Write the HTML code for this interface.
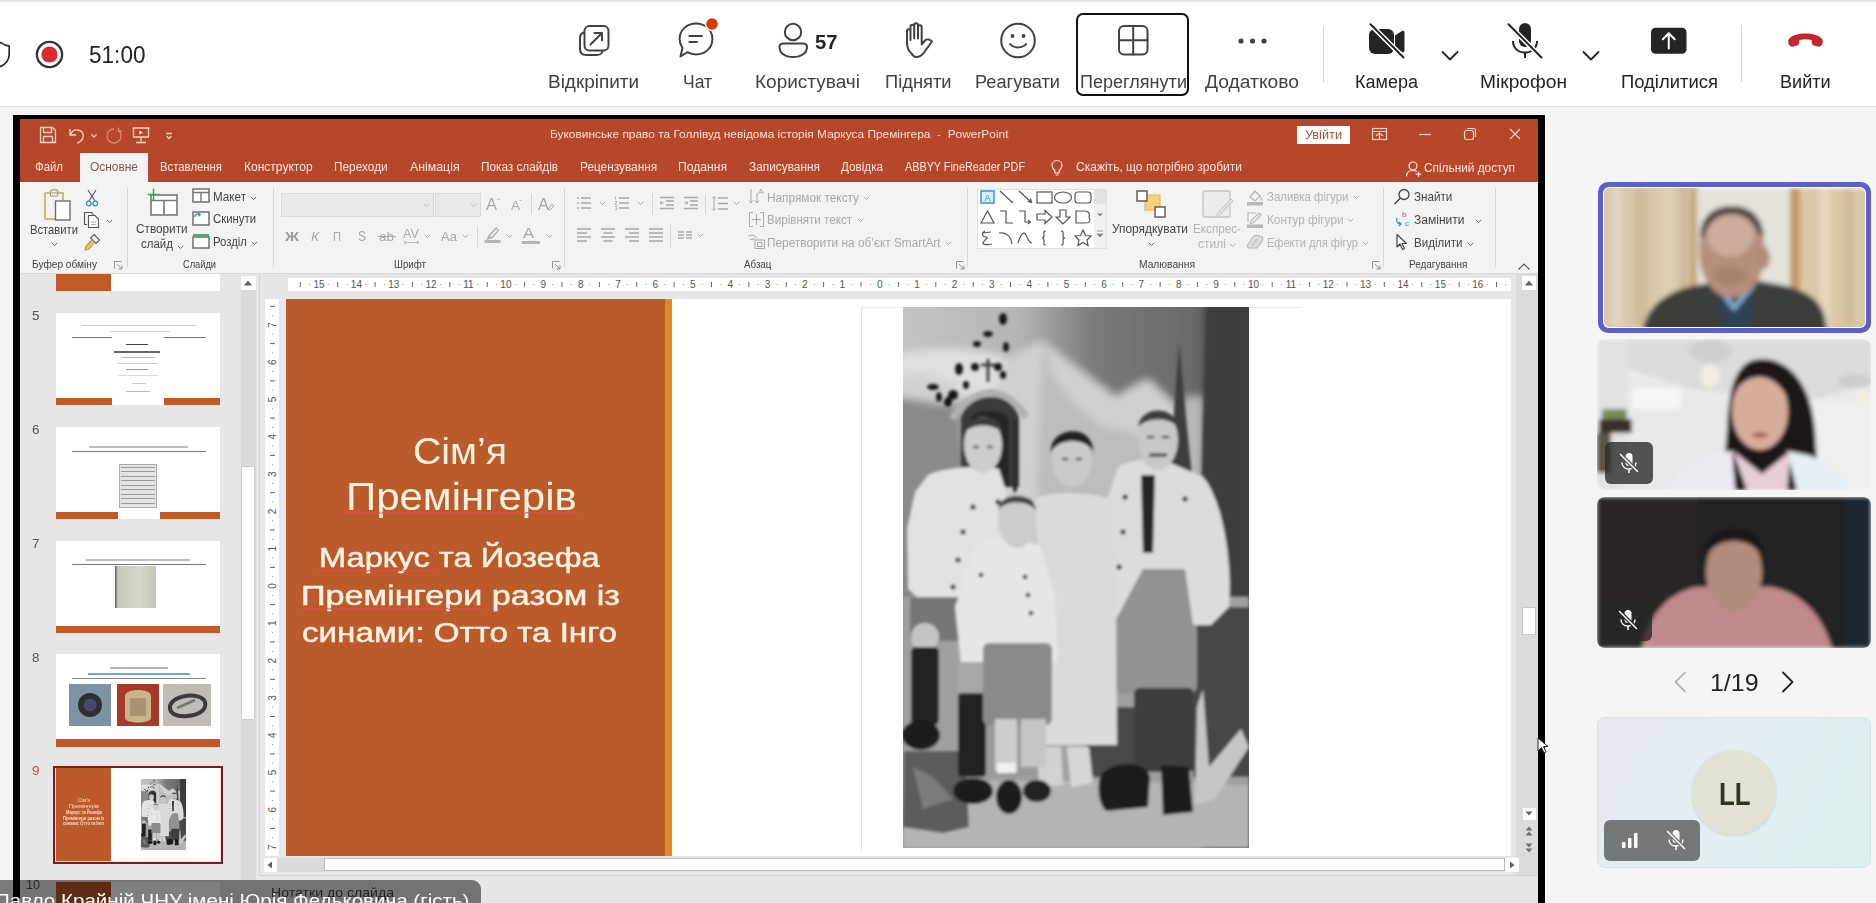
<!DOCTYPE html><html><head><meta charset="utf-8"><style>html,body{margin:0;padding:0;}body{width:1876px;height:903px;overflow:hidden;position:relative;background:#f5f5f5;font-family:"Liberation Sans",sans-serif;}.t{position:absolute;white-space:nowrap;line-height:1;}.a{position:absolute;}</style></head><body><div class="a" style="left:0px;top:0px;width:1876px;height:106px;background:#ffffff;"></div>
<div class="a" style="left:0px;top:0px;width:1876px;height:2px;background:#e4e4e4;"></div>
<div class="a" style="left:0px;top:106px;width:1876px;height:1px;background:#e0e0e0;"></div>
<svg class="a" style="left:-8px;top:41px;" width="20" height="27" viewBox="0 0 20 27"><path d="M9 1.5 C6 4 3 5 0.8 5 V13 C0.8 19 4.5 23 9 25.5 C13.5 23 17.2 19 17.2 13 V5 C15 5 12 4 9 1.5 Z" fill="none" stroke="#242424" stroke-width="1.6"/></svg>
<svg class="a" style="left:34px;top:39px;" width="31" height="31" viewBox="0 0 31 31"><circle cx="15.5" cy="15.5" r="12.6" fill="none" stroke="#333" stroke-width="2.3"/><circle cx="15.5" cy="15.5" r="8.1" fill="#dc2b30"/></svg>
<div class="t" style="left:88.7px;top:43.3px;font-size:24.5px;color:#242424;transform:scaleX(0.9215);transform-origin:0 0;">51:00</div>
<div class="t" style="left:548.0px;top:73.9px;font-size:17.6px;color:#424242;transform:scaleX(1.0763);transform-origin:0 0;">Відкріпити</div>
<div class="t" style="left:683.0px;top:73.9px;font-size:17.6px;color:#424242;transform:scaleX(0.9936);transform-origin:0 0;">Чат</div>
<div class="t" style="left:755.0px;top:73.9px;font-size:17.6px;color:#424242;transform:scaleX(1.0811);transform-origin:0 0;">Користувачі</div>
<div class="t" style="left:884.5px;top:73.9px;font-size:17.6px;color:#424242;transform:scaleX(1.0398);transform-origin:0 0;">Підняти</div>
<div class="t" style="left:975.0px;top:73.9px;font-size:17.6px;color:#424242;transform:scaleX(1.0342);transform-origin:0 0;">Реагувати</div>
<div class="t" style="left:1080.0px;top:73.9px;font-size:17.6px;color:#424242;transform:scaleX(1.0265);transform-origin:0 0;">Переглянути</div>
<div class="t" style="left:1205.0px;top:73.9px;font-size:17.6px;color:#424242;transform:scaleX(1.0948);transform-origin:0 0;">Додатково</div>
<div class="t" style="left:1355.0px;top:73.9px;font-size:17.6px;color:#242424;transform:scaleX(1.0247);transform-origin:0 0;">Камера</div>
<div class="t" style="left:1480.0px;top:73.9px;font-size:17.6px;color:#242424;transform:scaleX(1.0901);transform-origin:0 0;">Мікрофон</div>
<div class="t" style="left:1620.6px;top:73.9px;font-size:17.6px;color:#242424;transform:scaleX(1.0483);transform-origin:0 0;">Поділитися</div>
<div class="t" style="left:1780.0px;top:73.9px;font-size:17.6px;color:#242424;transform:scaleX(1.0268);transform-origin:0 0;">Вийти</div>
<svg class="a" style="left:577px;top:23px;" width="34" height="35" viewBox="0 0 34 35"><path d="M6.5 9.5 C4 10.5 3 12.5 3 15 V26 C3 30 5 32 9 32 H20 C22.5 32 24.5 31 25.5 28.5" fill="none" stroke="#424242" stroke-width="2" stroke-linecap="round" stroke-linejoin="round"/><rect x="7.5" y="3" width="24" height="24.5" rx="5" fill="none" stroke="#424242" stroke-width="2" stroke-linecap="round" stroke-linejoin="round"/><path d="M13.5 21.5 L25 10 M17.5 10 H25 V17.5" fill="none" stroke="#424242" stroke-width="2" stroke-linecap="round" stroke-linejoin="round"/></svg>
<svg class="a" style="left:677px;top:21px;" width="40" height="40" viewBox="0 0 40 40"><path d="M3.5 35.5 L5.5 27 C3.5 24 2.6 21 2.6 18 C2.6 9 10 2.5 19 2.5 C28 2.5 35.4 9 35.4 18 C35.4 27 28 33.5 19 33.5 C16 33.5 13 32.7 10.5 31.2 Z" fill="none" stroke="#424242" stroke-width="2" stroke-linecap="round" stroke-linejoin="round"/><path d="M12.5 15 H25 M12.5 21 H20" fill="none" stroke="#424242" stroke-width="2" stroke-linecap="round" stroke-linejoin="round"/></svg>
<svg class="a" style="left:703px;top:15px;" width="18" height="18" viewBox="0 0 18 18"><circle cx="9" cy="9" r="7.2" fill="#fff"/><circle cx="9" cy="9" r="5.8" fill="#d83b01"/></svg>
<svg class="a" style="left:776px;top:21px;" width="34" height="40" viewBox="0 0 34 40"><circle cx="17" cy="11" r="8.2" fill="none" stroke="#424242" stroke-width="2" stroke-linecap="round" stroke-linejoin="round"/><path d="M3.5 26 C3.5 23.5 5 22.5 7.5 22.5 H27 C29.5 22.5 31 23.5 31 26 C31 32 25.5 36 17 36 C8.5 36 3.5 32 3.5 26 Z" fill="none" stroke="#424242" stroke-width="2" stroke-linecap="round" stroke-linejoin="round"/></svg>
<div class="t" style="left:815.0px;top:31.5px;font-size:20.5px;color:#242424;font-weight:700;transform:scaleX(0.9863);transform-origin:0 0;">57</div>
<svg class="a" style="left:903px;top:21px;" width="34" height="40" viewBox="0 0 34 40"><path d="M9 33 C5 30 4 26 4 21 V10 C4 7.5 7.5 7.5 7.5 10 V19 M7.5 19 V5.5 C7.5 3 11.2 3 11.2 5.5 V17.5 M11.2 17.5 V4 C11.2 1.5 15 1.5 15 4 V17.5 M15 17.5 V6 C15 3.5 18.7 3.5 18.7 6 V23.5 L22 19.5 C24 17.5 27 18.5 29 20.5 L21 31.5 C19 34.5 16.5 36 13 36 C11.5 36 10 35 9 33" fill="none" stroke="#424242" stroke-width="2" stroke-linecap="round" stroke-linejoin="round"/></svg>
<svg class="a" style="left:999px;top:21px;" width="38" height="38" viewBox="0 0 38 38"><circle cx="19" cy="19.5" r="16.8" fill="none" stroke="#424242" stroke-width="2" stroke-linecap="round" stroke-linejoin="round"/><circle cx="13.5" cy="15" r="1.9" fill="#424242"/><circle cx="24.5" cy="15" r="1.9" fill="#424242"/><path d="M11 23 C14.5 27.5 23.5 27.5 27 23" fill="none" stroke="#424242" stroke-width="2" stroke-linecap="round" stroke-linejoin="round"/></svg>
<div class="a" style="left:1076px;top:13px;width:108.5px;height:78.5px;border:2.7px solid #111;border-radius:7px;"></div>
<svg class="a" style="left:1116px;top:23px;" width="34" height="35" viewBox="0 0 34 35"><rect x="3" y="3" width="28.5" height="28.5" rx="5" fill="none" stroke="#424242" stroke-width="2" stroke-linecap="round" stroke-linejoin="round"/><path d="M17.2 3 V31.5 M3 17.2 H31.5" fill="none" stroke="#424242" stroke-width="2" stroke-linecap="round" stroke-linejoin="round"/></svg>
<svg class="a" style="left:1236px;top:37px;" width="34" height="8" viewBox="0 0 34 8"><circle cx="5" cy="4" r="2.6" fill="#424242"/><circle cx="16.5" cy="4" r="2.6" fill="#424242"/><circle cx="28" cy="4" r="2.6" fill="#424242"/></svg>
<div class="a" style="left:1322.5px;top:26px;width:1.5px;height:57px;background:#d6d6d6;"></div>
<div class="a" style="left:1740.5px;top:26px;width:1.5px;height:56px;background:#d6d6d6;"></div>
<svg class="a" style="left:1367px;top:21px;" width="40" height="40" viewBox="0 0 40 40"><defs><mask id="cm"><rect width="40" height="40" fill="#fff"/><path d="M3 3 L37 37" stroke="#000" stroke-width="5"/></mask></defs><g mask="url(#cm)"><rect x="2" y="8" width="25" height="25" rx="6" fill="#242424"/><path d="M28 14.5 L35 10 C36.5 9.2 37.5 10 37.5 11.5 V29.5 C37.5 31 36.5 31.8 35 31 L28 26.5 Z" fill="#242424"/></g><path d="M3.5 3.2 L36.5 36.5" stroke="#242424" stroke-width="2" stroke-linecap="round"/></svg>
<svg class="a" style="left:1440px;top:49px;" width="20" height="13" viewBox="0 0 20 13"><path d="M2.5 3 L10 10.5 L17.5 3" fill="none" stroke="#242424" stroke-width="1.8" stroke-linecap="round" stroke-linejoin="round"/></svg>
<svg class="a" style="left:1581px;top:49px;" width="20" height="13" viewBox="0 0 20 13"><path d="M2.5 3 L10 10.5 L17.5 3" fill="none" stroke="#242424" stroke-width="1.8" stroke-linecap="round" stroke-linejoin="round"/></svg>
<svg class="a" style="left:1505px;top:21px;" width="40" height="40" viewBox="0 0 40 40"><defs><mask id="mm"><rect width="40" height="40" fill="#fff"/><path d="M3 3 L37 37" stroke="#000" stroke-width="5"/></mask></defs><g mask="url(#mm)"><rect x="14" y="2" width="12" height="24" rx="6" fill="#242424"/><path d="M8 20 C8 27 13 31.5 20 31.5 C27 31.5 32 27 32 20" fill="none" stroke="#242424" stroke-width="2"/></g><path d="M20 31.5 V37" stroke="#242424" stroke-width="2"/><path d="M3.5 3.2 L36.5 36.5" stroke="#242424" stroke-width="2" stroke-linecap="round"/></svg>
<svg class="a" style="left:1650px;top:27px;" width="38" height="28" viewBox="0 0 38 28"><rect x="1" y="0.8" width="35.5" height="26" rx="4.5" fill="#242424"/><path d="M18.75 21.5 V6.5 M12.8 12.3 L18.75 6.3 L24.7 12.3" fill="none" stroke="#fff" stroke-width="2" stroke-linecap="round" stroke-linejoin="round"/></svg>
<svg class="a" style="left:1786px;top:31px;" width="39" height="19" viewBox="0 0 39 19"><path d="M19.5 2.5 C12 2.5 6 4.5 3.3 7.5 C2 9 2 11 2.6 12.8 C3.2 14.8 5 16 7 15.6 L10.5 14.8 C12.5 14.3 13.5 12.5 13.4 10.5 L13.3 9 C17 8 22 8 25.7 9 L25.6 10.5 C25.5 12.5 26.5 14.3 28.5 14.8 L32 15.6 C34 16 35.8 14.8 36.4 12.8 C37 11 37 9 35.7 7.5 C33 4.5 27 2.5 19.5 2.5 Z" fill="#c4262e"/></svg>
<div class="a" style="left:13px;top:115px;width:1532px;height:788px;background:#000;"></div>
<div class="a" style="left:20px;top:119px;width:1518px;height:63px;background:#b7472a;"></div>
<div class="a" style="left:20px;top:182px;width:1518px;height:91px;background:#f3f3f3;"></div>
<div class="a" style="left:20px;top:273px;width:1518px;height:1px;background:#d8d8d8;"></div>
<div class="a" style="left:20px;top:274px;width:1518px;height:629px;background:#e6e6e6;"></div>
<div class="a" style="left:80px;top:153px;width:68px;height:30px;background:#f3f3f3;"></div>
<svg class="a" style="left:39px;top:126px;" width="18" height="18" viewBox="0 0 18 18"><path d="M1.5 1.5 H13.5 L16.5 4.5 V16.5 H1.5 Z" fill="none" stroke="#f9d3c4" stroke-width="1.3" stroke-linejoin="round"/><path d="M4.5 1.5 V6.5 H12.5 V1.5 M4.5 16.5 V10.5 H13.5 V16.5" fill="none" stroke="#f9d3c4" stroke-width="1.3" stroke-linejoin="round"/></svg>
<svg class="a" style="left:67px;top:126px;" width="20" height="18" viewBox="0 0 20 18"><path d="M3 3 V9 H9" fill="none" stroke="#f9d3c4" stroke-width="1.3" stroke-linejoin="round"/><path d="M3.5 8.5 C5 5 8 3.5 11 4 C15 4.5 17 8 16 11.5 C15.3 14 13 16 10.5 17" fill="none" stroke="#f9d3c4" stroke-width="1.3" stroke-linejoin="round" stroke-linecap="round"/></svg>
<svg class="a" style="left:90px;top:133px;" width="8" height="6" viewBox="0 0 8 6"><path d="M1.5 1.5 L4 4 L6.5 1.5" fill="none" stroke="#f9d3c4" stroke-width="1.3" stroke-linejoin="round"/></svg>
<svg class="a" style="left:104px;top:126px;" width="20" height="18" viewBox="0 0 20 18"><path d="M10 3 C5.5 3 3 6.5 3 10 C3 14 6 17 10 17 C14 17 17 14 17 10 C17 7.5 16 5.5 14 4.3 M14.5 1.5 V5 H18" fill="none" stroke="#d98a73" stroke-width="1.3"/></svg>
<svg class="a" style="left:131px;top:126px;" width="20" height="18" viewBox="0 0 20 18"><path d="M2.5 2 H17.5 V11 H2.5 Z M10 11 V15.5 M5 16.5 H15 M1.5 2 H18.5" fill="none" stroke="#f9d3c4" stroke-width="1.3" stroke-linejoin="round"/><path d="M8 4.5 L12.5 6.5 L8 8.5 Z" fill="#f9d3c4"/></svg>
<svg class="a" style="left:164px;top:131px;" width="10" height="10" viewBox="0 0 10 10"><path d="M2 2.5 H8 M2.5 5 L5 7.5 L7.5 5" fill="none" stroke="#f9d3c4" stroke-width="1.3" stroke-linejoin="round"/></svg>
<div class="t" style="left:549.6px;top:128.5px;font-size:11.2px;color:#fbe0d5;transform:scaleX(1.0632);transform-origin:0 0;white-space:pre;">Буковинське право та Голлівуд невідома історія Маркуса Премінгера  -  PowerPoint</div>
<div class="a" style="left:1297px;top:126px;width:53px;height:18px;background:#ffffff;"></div>
<div class="t" style="left:1305.0px;top:129.3px;font-size:12px;color:#a0523a;transform:scaleX(1.0600);transform-origin:0 0;">Увійти</div>
<svg class="a" style="left:1371px;top:127px;" width="17" height="14" viewBox="0 0 17 14"><rect x="1.5" y="1.5" width="14" height="11" fill="none" stroke="#f7d6ca" stroke-width="1.2"/><path d="M1.5 4.5 H15.5 M5 9 L8.5 6 L12 9 M8.5 6 V12.5" fill="none" stroke="#f7d6ca" stroke-width="1.2"/></svg>
<svg class="a" style="left:1418px;top:128px;" width="14" height="12" viewBox="0 0 14 12"><path d="M1 6.5 H13" fill="none" stroke="#f7d6ca" stroke-width="1.2"/></svg>
<svg class="a" style="left:1463px;top:127px;" width="14" height="14" viewBox="0 0 14 14"><rect x="1.5" y="3.5" width="9" height="9" rx="2" fill="none" stroke="#f7d6ca" stroke-width="1.2"/><path d="M4 1.5 H10.5 C11.7 1.5 12.5 2.3 12.5 3.5 V10" fill="none" stroke="#f7d6ca" stroke-width="1.2"/></svg>
<svg class="a" style="left:1508px;top:127px;" width="14" height="14" viewBox="0 0 14 14"><path d="M2 2 L12 12 M12 2 L2 12" fill="none" stroke="#f7d6ca" stroke-width="1.2" stroke-width="1.4"/></svg>
<div class="t" style="left:35.0px;top:161.4px;font-size:12.5px;color:#fbe7df;transform:scaleX(0.9110);transform-origin:0 0;">Файл</div>
<div class="t" style="left:160.0px;top:161.4px;font-size:12.5px;color:#fbe7df;transform:scaleX(0.9076);transform-origin:0 0;">Вставлення</div>
<div class="t" style="left:244.0px;top:161.4px;font-size:12.5px;color:#fbe7df;transform:scaleX(0.9624);transform-origin:0 0;">Конструктор</div>
<div class="t" style="left:334.3px;top:161.4px;font-size:12.5px;color:#fbe7df;transform:scaleX(0.9481);transform-origin:0 0;">Переходи</div>
<div class="t" style="left:409.8px;top:161.4px;font-size:12.5px;color:#fbe7df;transform:scaleX(0.9865);transform-origin:0 0;">Анімація</div>
<div class="t" style="left:481.0px;top:161.4px;font-size:12.5px;color:#fbe7df;transform:scaleX(0.9403);transform-origin:0 0;">Показ слайдів</div>
<div class="t" style="left:579.5px;top:161.4px;font-size:12.5px;color:#fbe7df;transform:scaleX(0.9474);transform-origin:0 0;">Рецензування</div>
<div class="t" style="left:678.0px;top:161.4px;font-size:12.5px;color:#fbe7df;transform:scaleX(0.9706);transform-origin:0 0;">Подання</div>
<div class="t" style="left:749.0px;top:161.4px;font-size:12.5px;color:#fbe7df;transform:scaleX(0.9494);transform-origin:0 0;">Записування</div>
<div class="t" style="left:841.0px;top:161.4px;font-size:12.5px;color:#fbe7df;transform:scaleX(0.9340);transform-origin:0 0;">Довідка</div>
<div class="t" style="left:905.0px;top:161.4px;font-size:12.5px;color:#fbe7df;transform:scaleX(0.8650);transform-origin:0 0;">ABBYY FineReader PDF</div>
<div class="t" style="left:1076.0px;top:161.4px;font-size:12.5px;color:#fbe7df;transform:scaleX(0.9623);transform-origin:0 0;">Скажіть, що потрібно зробити</div>
<div class="t" style="left:90.0px;top:161.4px;font-size:12.5px;color:#7d5d52;transform:scaleX(0.9537);transform-origin:0 0;">Основне</div>
<svg class="a" style="left:1050px;top:159px;" width="14" height="18" viewBox="0 0 14 18"><path d="M7 1.5 C3.8 1.5 2 4 2 6.5 C2 8.5 3.2 9.8 4.3 11 C4.8 11.6 5 12.2 5 13 V14 H9 V13 C9 12.2 9.2 11.6 9.7 11 C10.8 9.8 12 8.5 12 6.5 C12 4 10.2 1.5 7 1.5 Z M5.5 16 H8.5" fill="none" stroke="#fbe7df" stroke-width="1.2"/></svg>
<svg class="a" style="left:1405px;top:160px;" width="18" height="18" viewBox="0 0 18 18"><circle cx="8" cy="6" r="4" fill="none" stroke="#fbe7df" stroke-width="1.2"/><path d="M1.5 16.5 C1.5 12.5 4.5 10.5 8 10.5 C9.5 10.5 10.8 10.9 11.8 11.5 M13.5 11.5 V17 M10.8 14.2 H16.2" fill="none" stroke="#fbe7df" stroke-width="1.2"/></svg>
<div class="t" style="left:1424.0px;top:162.4px;font-size:12.5px;color:#fbe7df;transform:scaleX(0.9468);transform-origin:0 0;">Спільний доступ</div>
<div class="t" style="left:32.0px;top:259.3px;font-size:11.5px;color:#444444;transform:scaleX(0.8825);transform-origin:0 0;">Буфер обміну</div>
<div class="t" style="left:183.0px;top:259.3px;font-size:11.5px;color:#444444;transform:scaleX(0.8055);transform-origin:0 0;">Слайди</div>
<div class="t" style="left:394.0px;top:259.3px;font-size:11.5px;color:#444444;transform:scaleX(0.8456);transform-origin:0 0;">Шрифт</div>
<div class="t" style="left:743.6px;top:259.3px;font-size:11.5px;color:#444444;transform:scaleX(0.8492);transform-origin:0 0;">Абзац</div>
<div class="t" style="left:1139.0px;top:259.3px;font-size:11.5px;color:#444444;transform:scaleX(0.8924);transform-origin:0 0;">Малювання</div>
<div class="t" style="left:1409.0px;top:259.3px;font-size:11.5px;color:#444444;transform:scaleX(0.8630);transform-origin:0 0;">Редагування</div>
<svg class="a" style="left:114px;top:261px;" width="9" height="9" viewBox="0 0 9 9"><path d="M0.5 0.5 H7.5 M0.5 0.5 V7.5 M3 3 L8 8 M8 4.5 V8 H4.5" fill="none" stroke="#8a8a8a" stroke-width="0.9"/></svg>
<svg class="a" style="left:552px;top:261px;" width="9" height="9" viewBox="0 0 9 9"><path d="M0.5 0.5 H7.5 M0.5 0.5 V7.5 M3 3 L8 8 M8 4.5 V8 H4.5" fill="none" stroke="#8a8a8a" stroke-width="0.9"/></svg>
<svg class="a" style="left:956px;top:261px;" width="9" height="9" viewBox="0 0 9 9"><path d="M0.5 0.5 H7.5 M0.5 0.5 V7.5 M3 3 L8 8 M8 4.5 V8 H4.5" fill="none" stroke="#8a8a8a" stroke-width="0.9"/></svg>
<svg class="a" style="left:1372px;top:261px;" width="9" height="9" viewBox="0 0 9 9"><path d="M0.5 0.5 H7.5 M0.5 0.5 V7.5 M3 3 L8 8 M8 4.5 V8 H4.5" fill="none" stroke="#8a8a8a" stroke-width="0.9"/></svg>
<div class="a" style="left:126.6px;top:188px;width:1.0px;height:79px;background:#d6d6d6;"></div>
<div class="a" style="left:273px;top:188px;width:1px;height:79px;background:#d6d6d6;"></div>
<div class="a" style="left:564px;top:188px;width:1px;height:79px;background:#d6d6d6;"></div>
<div class="a" style="left:967px;top:188px;width:1px;height:79px;background:#d6d6d6;"></div>
<div class="a" style="left:1383px;top:188px;width:1px;height:79px;background:#d6d6d6;"></div>
<div class="a" style="left:1494.7px;top:188px;width:1.0px;height:79px;background:#d6d6d6;"></div>
<svg class="a" style="left:1517px;top:262px;" width="14" height="9" viewBox="0 0 14 9"><path d="M1.5 7.5 L7 2 L12.5 7.5" fill="none" stroke="#555" stroke-width="1.1"/></svg>
<svg class="a" style="left:41px;top:188px;" width="32" height="34" viewBox="0 0 32 34"><path d="M4 5 H9 C9 3 10.5 1.5 13 1.5 C15.5 1.5 17 3 17 5 H22 V12" fill="#f7f3ea" stroke="#d6a751" stroke-width="1.6"/><path d="M4 5 V31 H14" fill="none" stroke="#d6a751" stroke-width="1.6"/><path d="M9.5 5 H16.5 V8 H9.5 Z" fill="#fff" stroke="#8d8d8d" stroke-width="1"/><rect x="14.5" y="13" width="14.5" height="19" fill="#fff" stroke="#6e6e6e" stroke-width="1.4"/></svg>
<div class="t" style="left:30.0px;top:224.4px;font-size:12.5px;color:#444444;transform:scaleX(0.8977);transform-origin:0 0;">Вставити</div>
<svg class="a" style="left:51px;top:242px;" width="7" height="5" viewBox="0 0 7 5"><path d="M0.8 0.8 L3.5 3.5 L6.2 0.8" fill="none" stroke="#666" stroke-width="1"/></svg>
<svg class="a" style="left:85px;top:189px;" width="14" height="18" viewBox="0 0 14 18"><path d="M3 1 L10 12 M11 1 L4 12" stroke="#555" stroke-width="1.1" fill="none"/><circle cx="3.8" cy="14.5" r="2.3" fill="none" stroke="#3c8dc5" stroke-width="1.3"/><circle cx="10.2" cy="14.5" r="2.3" fill="none" stroke="#3c8dc5" stroke-width="1.3"/></svg>
<svg class="a" style="left:83px;top:211px;" width="18" height="18" viewBox="0 0 18 18"><path d="M4 13.5 H1.5 V1.5 H8.5 L10.5 3.5" fill="none" stroke="#555" stroke-width="1.1"/><path d="M5.5 4.5 H12 L15.5 8 V16.5 H5.5 Z" fill="#fff" stroke="#555" stroke-width="1.1"/><path d="M8 11 H13 M8 13.5 H13" stroke="#999" stroke-width="0.8"/></svg>
<svg class="a" style="left:106px;top:219px;" width="7" height="5" viewBox="0 0 7 5"><path d="M0.8 0.8 L3.5 3.5 L6.2 0.8" fill="none" stroke="#777" stroke-width="1"/></svg>
<svg class="a" style="left:83px;top:233px;" width="18" height="18" viewBox="0 0 18 18"><path d="M11 1.5 L16.5 7 L13 10.5 L7.5 5 Z" fill="#fff" stroke="#555" stroke-width="1.1"/><path d="M9 7 L3 13 L2 17 L6 16 L11 10" fill="#f0c25a" stroke="#c9962e" stroke-width="1.1"/></svg>
<svg class="a" style="left:145px;top:187px;" width="36" height="30" viewBox="0 0 36 30"><rect x="6" y="8" width="26" height="20" fill="#fff" stroke="#777" stroke-width="1.6"/><path d="M6 13.5 H32 M19 13.5 V28" stroke="#777" stroke-width="1.6"/><path d="M8.5 1.5 V14 M2.5 7.5 H15" stroke="#3aa35a" stroke-width="1.5"/></svg>
<div class="t" style="left:136.0px;top:223.4px;font-size:12.5px;color:#444444;transform:scaleX(0.9406);transform-origin:0 0;">Створити</div>
<div class="t" style="left:141.0px;top:238.4px;font-size:12.5px;color:#444444;transform:scaleX(0.9200);transform-origin:0 0;">слайд</div>
<svg class="a" style="left:177px;top:245px;" width="7" height="5" viewBox="0 0 7 5"><path d="M0.8 0.8 L3.5 3.5 L6.2 0.8" fill="none" stroke="#666" stroke-width="1"/></svg>
<div class="t" style="left:213.0px;top:191.4px;font-size:12.5px;color:#444444;transform:scaleX(0.9325);transform-origin:0 0;">Макет</div>
<svg class="a" style="left:250px;top:196px;" width="7" height="5" viewBox="0 0 7 5"><path d="M0.8 0.8 L3.5 3.5 L6.2 0.8" fill="none" stroke="#666" stroke-width="1"/></svg>
<div class="t" style="left:213.0px;top:213.4px;font-size:12.5px;color:#444444;transform:scaleX(0.9083);transform-origin:0 0;">Скинути</div>
<div class="t" style="left:213.0px;top:236.4px;font-size:12.5px;color:#444444;transform:scaleX(0.9086);transform-origin:0 0;">Розділ</div>
<svg class="a" style="left:251px;top:241px;" width="7" height="5" viewBox="0 0 7 5"><path d="M0.8 0.8 L3.5 3.5 L6.2 0.8" fill="none" stroke="#666" stroke-width="1"/></svg>
<svg class="a" style="left:192px;top:188px;" width="18" height="15" viewBox="0 0 18 15"><rect x="1" y="1" width="16" height="13" fill="#fff" stroke="#777" stroke-width="1.6"/><path d="M1 4.5 H17 M9 4.5 V14" stroke="#777" stroke-width="1.4"/></svg>
<svg class="a" style="left:192px;top:211px;" width="18" height="15" viewBox="0 0 18 15"><rect x="1" y="1" width="16" height="13" fill="#fff" stroke="#777" stroke-width="1.6"/><path d="M2.5 6 C3 3 6 2 8 3.5 M6.5 1.8 L8.2 3.6 L6.3 5.2" fill="none" stroke="#3c8dc5" stroke-width="1.3"/></svg>
<svg class="a" style="left:192px;top:233px;" width="18" height="16" viewBox="0 0 18 16"><rect x="1" y="4" width="16" height="11" fill="#fff" stroke="#777" stroke-width="1.6"/><rect x="1" y="1" width="16" height="3" fill="#5aa36b"/></svg>
<div class="a" style="left:281px;top:193px;width:151px;height:22px;background:#e9e9e9;border:1px solid #dadada;"></div>
<div class="a" style="left:435px;top:193px;width:44px;height:22px;background:#e9e9e9;border:1px solid #dadada;"></div>
<svg class="a" style="left:423px;top:203px;" width="7" height="5" viewBox="0 0 7 5"><path d="M0.8 0.8 L3.5 3.5 L6.2 0.8" fill="none" stroke="#bbb" stroke-width="1"/></svg>
<svg class="a" style="left:470px;top:203px;" width="7" height="5" viewBox="0 0 7 5"><path d="M0.8 0.8 L3.5 3.5 L6.2 0.8" fill="none" stroke="#bbb" stroke-width="1"/></svg>
<div class="t" style="left:486.0px;top:196.5px;font-size:16px;color:#a9a9a9;transform:scaleX(1.0307);transform-origin:0 0;">A</div>
<div class="t" style="left:497.0px;top:198.5px;font-size:10px;color:#a9a9a9;">ˆ</div>
<div class="t" style="left:511.0px;top:199.0px;font-size:13px;color:#a9a9a9;transform:scaleX(1.0378);transform-origin:0 0;">A</div>
<div class="t" style="left:519.0px;top:199.4px;font-size:9px;color:#a9a9a9;">ˇ</div>
<div class="a" style="left:531px;top:194px;width:1px;height:20px;background:#d6d6d6;"></div>
<div class="t" style="left:538.0px;top:196.5px;font-size:16px;color:#a9a9a9;transform:scaleX(1.0307);transform-origin:0 0;">A</div>
<svg class="a" style="left:546px;top:202px;" width="9" height="9" viewBox="0 0 9 9"><path d="M2 7 L6 2 L8 4 L4 8 Z" fill="none" stroke="#a9a9a9" stroke-width="1"/></svg>
<div class="t" style="left:285.0px;top:229.6px;font-size:13.5px;color:#9a9a9a;font-weight:700;transform:scaleX(1.1472);transform-origin:0 0;">Ж</div>
<div class="t" style="left:311.0px;top:230.0px;font-size:13px;color:#a9a9a9;transform:scaleX(1.0428);transform-origin:0 0;font-style:italic;">К</div>
<div class="t" style="left:333.0px;top:230.0px;font-size:13px;color:#a9a9a9;transform:scaleX(0.8562);transform-origin:0 0;">П</div>
<div class="t" style="left:358.0px;top:229.1px;font-size:14px;color:#a9a9a9;transform:scaleX(0.8562);transform-origin:0 0;">S</div>
<div class="t" style="left:379.0px;top:230.8px;font-size:12px;color:#a9a9a9;transform:scaleX(1.1228);transform-origin:0 0;">ab</div>
<div class="a" style="left:378px;top:236px;width:18px;height:1px;background:#a9a9a9;"></div>
<div class="t" style="left:403.0px;top:228.4px;font-size:12.5px;color:#a9a9a9;transform:scaleX(1.0159);transform-origin:0 0;">AV</div>
<svg class="a" style="left:403px;top:240px;" width="17" height="5" viewBox="0 0 17 5"><path d="M1 2.5 H16 M3 1 L1 2.5 L3 4 M14 1 L16 2.5 L14 4" fill="none" stroke="#a9a9a9" stroke-width="0.8"/></svg>
<svg class="a" style="left:424px;top:234px;" width="7" height="5" viewBox="0 0 7 5"><path d="M0.8 0.8 L3.5 3.5 L6.2 0.8" fill="none" stroke="#a9a9a9" stroke-width="1"/></svg>
<div class="t" style="left:441.0px;top:230.0px;font-size:13px;color:#a9a9a9;transform:scaleX(1.0059);transform-origin:0 0;">Aa</div>
<svg class="a" style="left:462px;top:234px;" width="7" height="5" viewBox="0 0 7 5"><path d="M0.8 0.8 L3.5 3.5 L6.2 0.8" fill="none" stroke="#a9a9a9" stroke-width="1"/></svg>
<div class="a" style="left:477px;top:226px;width:1px;height:21px;background:#d6d6d6;"></div>
<svg class="a" style="left:483px;top:224px;" width="19" height="20" viewBox="0 0 19 20"><path d="M6 12 L13 4 L15.5 6.5 L8.5 14 Z M6 12 L4.5 15 L8.5 14" fill="none" stroke="#a9a9a9" stroke-width="1.2"/><rect x="1.5" y="16" width="16" height="3" fill="#b5b5b5"/></svg>
<svg class="a" style="left:506px;top:234px;" width="7" height="5" viewBox="0 0 7 5"><path d="M0.8 0.8 L3.5 3.5 L6.2 0.8" fill="none" stroke="#a9a9a9" stroke-width="1"/></svg>
<div class="t" style="left:523.0px;top:226.1px;font-size:14px;color:#a9a9a9;transform:scaleX(1.1773);transform-origin:0 0;">A</div>
<div class="a" style="left:522px;top:241px;width:18px;height:3px;background:#b5b5b5;"></div>
<svg class="a" style="left:546px;top:234px;" width="7" height="5" viewBox="0 0 7 5"><path d="M0.8 0.8 L3.5 3.5 L6.2 0.8" fill="none" stroke="#a9a9a9" stroke-width="1"/></svg>
<svg class="a" style="left:576px;top:195px;" width="16" height="16" viewBox="0 0 16 16"><path d="M5 3 H15 M5 8 H15 M5 13 H15" stroke="#a9a9a9" stroke-width="1.3"/><path d="M1 3 H3 M1 8 H3 M1 13 H3" stroke="#a9a9a9" stroke-width="1.3"/></svg>
<svg class="a" style="left:599px;top:201px;" width="7" height="5" viewBox="0 0 7 5"><path d="M0.8 0.8 L3.5 3.5 L6.2 0.8" fill="none" stroke="#a9a9a9" stroke-width="1"/></svg>
<svg class="a" style="left:614px;top:195px;" width="16" height="16" viewBox="0 0 16 16"><path d="M5 3 H15 M5 8 H15 M5 13 H15" stroke="#a9a9a9" stroke-width="1.3"/><path d="M1.5 1.5 V4.5 M1 6.5 H3 L1 9.5 H3 M1 11.5 H3 V14.5 H1" stroke="#a9a9a9" stroke-width="0.8" fill="none"/></svg>
<svg class="a" style="left:637px;top:201px;" width="7" height="5" viewBox="0 0 7 5"><path d="M0.8 0.8 L3.5 3.5 L6.2 0.8" fill="none" stroke="#a9a9a9" stroke-width="1"/></svg>
<div class="a" style="left:652px;top:194px;width:1px;height:20px;background:#d6d6d6;"></div>
<svg class="a" style="left:659px;top:195px;" width="16" height="16" viewBox="0 0 16 16"><path d="M1 2.5 H15 M7 6 H15 M7 10 H15 M1 13.5 H15" stroke="#a9a9a9" stroke-width="1.3"/><path d="M5 8 L1 8 M3 6 L1 8 L3 10" stroke="#a9a9a9" stroke-width="1" fill="none"/></svg>
<svg class="a" style="left:683px;top:195px;" width="16" height="16" viewBox="0 0 16 16"><path d="M1 2.5 H15 M7 6 H15 M7 10 H15 M1 13.5 H15" stroke="#a9a9a9" stroke-width="1.3"/><path d="M1 8 L5 8 M3 6 L5 8 L3 10" stroke="#a9a9a9" stroke-width="1" fill="none"/></svg>
<div class="a" style="left:705px;top:194px;width:1px;height:20px;background:#d6d6d6;"></div>
<svg class="a" style="left:711px;top:195px;" width="18" height="17" viewBox="0 0 18 17"><path d="M7 3 H17 M7 8.5 H17 M7 14 H17" stroke="#a9a9a9" stroke-width="1.3"/><path d="M3 1.5 V15.5 M1 3.5 L3 1.5 L5 3.5 M1 13.5 L3 15.5 L5 13.5" stroke="#a9a9a9" stroke-width="1" fill="none"/></svg>
<svg class="a" style="left:733px;top:201px;" width="7" height="5" viewBox="0 0 7 5"><path d="M0.8 0.8 L3.5 3.5 L6.2 0.8" fill="none" stroke="#a9a9a9" stroke-width="1"/></svg>
<svg class="a" style="left:576px;top:227px;" width="16" height="16" viewBox="0 0 16 16"><path d="M1 2 H15 M1 6 H11 M1 10 H15 M1 14 H11" stroke="#a9a9a9" stroke-width="1.3"/></svg>
<svg class="a" style="left:600px;top:227px;" width="16" height="16" viewBox="0 0 16 16"><path d="M1 2 H15 M3.5 6 H12.5 M1 10 H15 M3.5 14 H12.5" stroke="#a9a9a9" stroke-width="1.3"/></svg>
<svg class="a" style="left:624px;top:227px;" width="16" height="16" viewBox="0 0 16 16"><path d="M1 2 H15 M5 6 H15 M1 10 H15 M5 14 H15" stroke="#a9a9a9" stroke-width="1.3"/></svg>
<svg class="a" style="left:648px;top:227px;" width="16" height="16" viewBox="0 0 16 16"><path d="M1 2 H15 M1 6 H15 M1 10 H15 M1 14 H15" stroke="#a9a9a9" stroke-width="1.3"/></svg>
<div class="a" style="left:670px;top:225px;width:1px;height:22px;background:#d6d6d6;"></div>
<svg class="a" style="left:677px;top:227px;" width="16" height="16" viewBox="0 0 16 16"><path d="M1 5 H7 M1 8 H7 M1 11 H7 M9 5 H15 M9 8 H15 M9 11 H15" stroke="#a9a9a9" stroke-width="1.3"/></svg>
<svg class="a" style="left:697px;top:233px;" width="7" height="5" viewBox="0 0 7 5"><path d="M0.8 0.8 L3.5 3.5 L6.2 0.8" fill="none" stroke="#a9a9a9" stroke-width="1"/></svg>
<svg class="a" style="left:748px;top:188px;" width="17" height="17" viewBox="0 0 17 17"><path d="M3 1 V15 M1 12.5 L3 15 L5 12.5 M9 5 V15 M7 12.5 L9 15 L11 12.5" fill="none" stroke="#a9a9a9" stroke-width="1"/><path d="M10.5 6 L13 1 L15.5 6 M11.5 4.3 H14.5" fill="none" stroke="#a9a9a9" stroke-width="0.9"/></svg>
<div class="t" style="left:767.0px;top:191.8px;font-size:12px;color:#a9a9a9;transform:scaleX(0.9846);transform-origin:0 0;">Напрямок тексту</div>
<svg class="a" style="left:863px;top:196px;" width="7" height="5" viewBox="0 0 7 5"><path d="M0.8 0.8 L3.5 3.5 L6.2 0.8" fill="none" stroke="#a9a9a9" stroke-width="1"/></svg>
<svg class="a" style="left:748px;top:211px;" width="17" height="17" viewBox="0 0 17 17"><path d="M5 1.5 H1.5 V15.5 H5 M12 1.5 H15.5 V15.5 H12 M8.5 3 V14 M4 8.5 H13" fill="none" stroke="#a9a9a9" stroke-width="1"/></svg>
<div class="t" style="left:767.0px;top:213.8px;font-size:12px;color:#a9a9a9;transform:scaleX(0.9659);transform-origin:0 0;">Вирівняти текст</div>
<svg class="a" style="left:857px;top:218px;" width="7" height="5" viewBox="0 0 7 5"><path d="M0.8 0.8 L3.5 3.5 L6.2 0.8" fill="none" stroke="#a9a9a9" stroke-width="1"/></svg>
<svg class="a" style="left:747px;top:234px;" width="19" height="16" viewBox="0 0 19 16"><path d="M1.5 2 L6 1 L10 4 M3 5.5 L8 5 M8 6 H17.5 V14.5 H8 Z M10.5 8.5 H15 V12.5 H10.5 Z" fill="none" stroke="#a9a9a9" stroke-width="1"/></svg>
<div class="t" style="left:767.0px;top:236.8px;font-size:12px;color:#a9a9a9;transform:scaleX(0.9858);transform-origin:0 0;">Перетворити на об’єкт SmartArt</div>
<svg class="a" style="left:945px;top:241px;" width="7" height="5" viewBox="0 0 7 5"><path d="M0.8 0.8 L3.5 3.5 L6.2 0.8" fill="none" stroke="#a9a9a9" stroke-width="1"/></svg>
<div class="a" style="left:977px;top:189px;width:130px;height:60px;background:#fff;border:1px solid #e0e0e0;box-sizing:border-box;"></div>
<div class="a" style="left:1094px;top:190px;width:12px;height:58px;background:#f0f0f0;"></div>
<div class="a" style="left:1094px;top:190px;width:12px;height:14px;background:#e2e2e2;"></div>
<svg class="a" style="left:1095px;top:211px;" width="10" height="8" viewBox="0 0 10 8"><path d="M2 2.5 L5 5.5 L8 2.5 Z" fill="#888"/></svg>
<svg class="a" style="left:1095px;top:229px;" width="10" height="10" viewBox="0 0 10 10"><path d="M2 2 H8 M2 5 L5 8 L8 5 Z" fill="#888" stroke="#888" stroke-width="0.8"/></svg>
<svg class="a" style="left:979px;top:189px;" width="114" height="60" viewBox="0 0 114 60"><rect x="2" y="2" width="13" height="12" fill="#d9eef8" stroke="#2e8fc8" stroke-width="1.4"/><text x="8.5" y="12" font-size="9" font-family="Liberation Sans" fill="#2e8fc8" text-anchor="middle">A</text><path d="M21 2 L34 14" fill="none" stroke="#555" stroke-width="1.2"/><path d="M40 2 L52 13 M48.5 12.5 L52.5 13.5 L51.5 9.5" fill="none" stroke="#555" stroke-width="1.2"/><rect x="58" y="3" width="15" height="11" fill="none" stroke="#555" stroke-width="1.2"/><ellipse cx="84" cy="8.5" rx="8.5" ry="5.5" fill="none" stroke="#555" stroke-width="1.2"/><rect x="96" y="3" width="16" height="11" rx="3" fill="none" stroke="#555" stroke-width="1.2"/><path d="M2 34 L8.5 22 L15 34 Z" fill="none" stroke="#555" stroke-width="1.2"/><path d="M21 22 H27 V34 H34" fill="none" stroke="#555" stroke-width="1.2"/><path d="M40 22 H46 V33 H51 M49 31 L51.5 33 L49 35" fill="none" stroke="#555" stroke-width="1.2"/><path d="M58 25 H66 V21.5 L73 28 L66 34.5 V31 H58 Z" fill="none" stroke="#555" stroke-width="1.2"/><path d="M81 21 H87 V28 H91 L84 35 L77 28 H81 Z" fill="none" stroke="#555" stroke-width="1.2"/><path d="M97 22 H106 C110 22 111 25 110 28 C112 31 111 34 107 34 H97 Z" fill="none" stroke="#555" stroke-width="1.2"/><path d="M6 42 C2 44 3 48 7 48 C11 48 4 52 4 54 C4 56 9 56 13 55 M4 44 L12 43" fill="none" stroke="#555" stroke-width="1.2"/><path d="M20 44 C27 43 32 47 33 55" fill="none" stroke="#555" stroke-width="1.2"/><path d="M39 54 C42 44 45 42 47 46 C49 50 50 54 53 54" fill="none" stroke="#555" stroke-width="1.2"/><path d="M67 42 C64 42 65 44 65 47 C65 49 63 49 63 49 C63 49 65 49 65 51 C65 54 64 56 67 56" fill="none" stroke="#555" stroke-width="1.2"/><path d="M82 42 C85 42 84 44 84 47 C84 49 86 49 86 49 C86 49 84 49 84 51 C84 54 85 56 82 56" fill="none" stroke="#555" stroke-width="1.2"/><path d="M104 41 L106.5 46.5 L112 47 L108 51 L109 56.5 L104 53.5 L99 56.5 L100 51 L96 47 L101.5 46.5 Z" fill="none" stroke="#555" stroke-width="1.2"/></svg>
<svg class="a" style="left:1135px;top:189px;" width="33" height="31" viewBox="0 0 33 31"><rect x="10" y="6" width="15" height="15" fill="#f5d27a" stroke="#e2b146" stroke-width="1"/><rect x="2" y="2" width="10" height="10" fill="#fff" stroke="#555" stroke-width="1.4"/><rect x="20" y="18" width="10" height="10" fill="#fff" stroke="#555" stroke-width="1.4"/></svg>
<div class="t" style="left:1112.0px;top:223.4px;font-size:12.5px;color:#444444;transform:scaleX(0.9534);transform-origin:0 0;">Упорядкувати</div>
<svg class="a" style="left:1148px;top:242px;" width="7" height="5" viewBox="0 0 7 5"><path d="M0.8 0.8 L3.5 3.5 L6.2 0.8" fill="none" stroke="#666" stroke-width="1"/></svg>
<svg class="a" style="left:1201px;top:189px;" width="36" height="32" viewBox="0 0 36 32"><rect x="2" y="2" width="27" height="26" rx="2" fill="#ececec" stroke="#c4c4c4" stroke-width="1.3"/><path d="M32 12 L20 25 C18 27 16 28 14 28.5 C15 26 16.5 24 18 22.5 L30 10 Z" fill="#e0e0e0" stroke="#c4c4c4" stroke-width="1"/></svg>
<div class="t" style="left:1193.0px;top:223.4px;font-size:12.5px;color:#b4b4b4;transform:scaleX(0.9357);transform-origin:0 0;">Експрес-</div>
<div class="t" style="left:1198.0px;top:238.4px;font-size:12.5px;color:#b4b4b4;transform:scaleX(0.9645);transform-origin:0 0;">стилі</div>
<svg class="a" style="left:1229px;top:243px;" width="7" height="5" viewBox="0 0 7 5"><path d="M0.8 0.8 L3.5 3.5 L6.2 0.8" fill="none" stroke="#a9a9a9" stroke-width="1"/></svg>
<svg class="a" style="left:1245px;top:188px;" width="20" height="18" viewBox="0 0 20 18"><path d="M5 9 L10 3 L15 8 L10 13 Z" fill="none" stroke="#b8b8b8" stroke-width="1.3"/><path d="M15 8 C16.5 10 17 11.5 16 12.5" fill="none" stroke="#b8b8b8" stroke-width="1.2"/><rect x="2" y="14" width="16" height="3.5" fill="#b8b8b8"/></svg>
<div class="t" style="left:1266.5px;top:190.8px;font-size:12px;color:#b4b4b4;transform:scaleX(0.9511);transform-origin:0 0;">Заливка фігури</div>
<svg class="a" style="left:1353px;top:195px;" width="7" height="5" viewBox="0 0 7 5"><path d="M0.8 0.8 L3.5 3.5 L6.2 0.8" fill="none" stroke="#a9a9a9" stroke-width="1"/></svg>
<svg class="a" style="left:1245px;top:210px;" width="20" height="18" viewBox="0 0 20 18"><path d="M3 12 V3 H11 M6 11 L14 3 L16 5 L8 13 L5.5 13.5 Z" fill="none" stroke="#b8b8b8" stroke-width="1.2"/><rect x="2" y="14.5" width="16" height="3.5" fill="#b8b8b8"/></svg>
<div class="t" style="left:1266.5px;top:213.8px;font-size:12px;color:#b4b4b4;transform:scaleX(0.9814);transform-origin:0 0;">Контур фігури</div>
<svg class="a" style="left:1347px;top:218px;" width="7" height="5" viewBox="0 0 7 5"><path d="M0.8 0.8 L3.5 3.5 L6.2 0.8" fill="none" stroke="#a9a9a9" stroke-width="1"/></svg>
<svg class="a" style="left:1245px;top:233px;" width="20" height="17" viewBox="0 0 20 17"><path d="M2.5 12 L8 4 C9 2.5 11 2 13 2.5 L17 4 C18 5 18 6.5 17 8 L12 15 H5 C3 15 2 13.5 2.5 12 Z M7 13 L12 6" fill="#ddd" stroke="#b8b8b8" stroke-width="1.2"/></svg>
<div class="t" style="left:1266.5px;top:236.8px;font-size:12px;color:#b4b4b4;transform:scaleX(0.9214);transform-origin:0 0;">Ефекти для фігур</div>
<svg class="a" style="left:1362px;top:241px;" width="7" height="5" viewBox="0 0 7 5"><path d="M0.8 0.8 L3.5 3.5 L6.2 0.8" fill="none" stroke="#a9a9a9" stroke-width="1"/></svg>
<svg class="a" style="left:1393px;top:188px;" width="19" height="17" viewBox="0 0 19 17"><circle cx="11" cy="6.5" r="5" fill="none" stroke="#444" stroke-width="1.3"/><path d="M7.5 10 L1.5 16" stroke="#444" stroke-width="1.5"/></svg>
<div class="t" style="left:1413.6px;top:191.4px;font-size:12.5px;color:#444444;transform:scaleX(0.9341);transform-origin:0 0;">Знайти</div>
<svg class="a" style="left:1393px;top:209px;" width="20" height="19" viewBox="0 0 20 19"><text x="9" y="8" font-size="8" font-family="Liberation Sans" fill="#8b4fb8">b</text><text x="12" y="17" font-size="8" font-family="Liberation Sans" fill="#2e8fc8">c</text><path d="M4 9 C3 12 4 15 8 15 M6 13 L8 15 L6 17" fill="none" stroke="#2e8fc8" stroke-width="1.2"/></svg>
<div class="t" style="left:1413.6px;top:214.4px;font-size:12.5px;color:#444444;transform:scaleX(0.9625);transform-origin:0 0;">Замінити</div>
<svg class="a" style="left:1475px;top:219px;" width="7" height="5" viewBox="0 0 7 5"><path d="M0.8 0.8 L3.5 3.5 L6.2 0.8" fill="none" stroke="#666" stroke-width="1"/></svg>
<svg class="a" style="left:1395px;top:233px;" width="14" height="18" viewBox="0 0 14 18"><path d="M2 1.5 V14 L5 11 L7.5 16.5 L9.5 15.5 L7 10.5 H11.5 Z" fill="#fff" stroke="#444" stroke-width="1.2" stroke-linejoin="round"/></svg>
<div class="t" style="left:1413.6px;top:237.4px;font-size:12.5px;color:#444444;transform:scaleX(0.9241);transform-origin:0 0;">Виділити</div>
<svg class="a" style="left:1467px;top:242px;" width="7" height="5" viewBox="0 0 7 5"><path d="M0.8 0.8 L3.5 3.5 L6.2 0.8" fill="none" stroke="#666" stroke-width="1"/></svg>
<div class="a" style="left:259px;top:274px;width:1px;height:602px;background:#d2d2d2;"></div>
<div class="a" style="left:240.5px;top:290px;width:15.0px;height:590px;background:#dadada;"></div>
<div class="a" style="left:240.5px;top:276px;width:15px;height:14px;background:#fff;"></div>
<svg class="a" style="left:243px;top:279px;" width="10" height="8" viewBox="0 0 10 8"><path d="M1 6.5 L5 1.5 L9 6.5 Z" fill="#606060"/></svg>
<div class="a" style="left:241px;top:465.5px;width:14px;height:254.5px;background:#ffffff;border:1px solid #d0d0d0;box-sizing:border-box;"></div>
<div class="a" style="left:55.5px;top:274px;width:55.3px;height:17px;background:#c05a26;"></div>
<div class="a" style="left:110.8px;top:274px;width:109.50000000000001px;height:17px;background:#ffffff;"></div>
<div class="t" style="left:32.0px;top:308.8px;font-size:13.5px;color:#555;transform:scaleX(0.9979);transform-origin:0 0;">5</div>
<div class="a" style="left:55.5px;top:312.7px;width:164.8px;height:92.5px;background:#ffffff;"></div>
<div class="t" style="left:32.0px;top:422.7px;font-size:13.5px;color:#555;transform:scaleX(0.9979);transform-origin:0 0;">6</div>
<div class="a" style="left:55.5px;top:426.6px;width:164.8px;height:92.5px;background:#ffffff;"></div>
<div class="t" style="left:32.0px;top:536.6px;font-size:13.5px;color:#555;transform:scaleX(0.9979);transform-origin:0 0;">7</div>
<div class="a" style="left:55.5px;top:540.5px;width:164.8px;height:92.5px;background:#ffffff;"></div>
<div class="t" style="left:32.0px;top:650.5px;font-size:13.5px;color:#555;transform:scaleX(0.9979);transform-origin:0 0;">8</div>
<div class="a" style="left:55.5px;top:654.4000000000001px;width:164.8px;height:92.5px;background:#ffffff;"></div>
<div class="t" style="left:32.0px;top:764.4px;font-size:13.5px;color:#c0504d;transform:scaleX(0.9979);transform-origin:0 0;">9</div>
<div class="a" style="left:55.5px;top:397.9px;width:56.5px;height:7.300000000000011px;background:#c05a26;"></div>
<div class="a" style="left:164px;top:397.9px;width:56.30000000000001px;height:7.300000000000011px;background:#c05a26;"></div>
<div class="a" style="left:81px;top:324.7px;width:115px;height:1.5px;background:#c9c9c9;"></div>
<div class="a" style="left:110px;top:330.7px;width:60px;height:1.5px;background:#d4d4d4;"></div>
<div class="a" style="left:72px;top:337.2px;width:40px;height:0.8000000000000114px;background:#777;"></div>
<div class="a" style="left:164px;top:337.2px;width:42px;height:0.8000000000000114px;background:#777;"></div>
<div class="a" style="left:126px;top:343.7px;width:22px;height:1.0px;background:#444;"></div>
<div class="a" style="left:114px;top:350.7px;width:46px;height:2.0px;background:#666;"></div>
<div class="a" style="left:122px;top:356.7px;width:33px;height:1.0px;background:#bbb;"></div>
<div class="a" style="left:118px;top:362.7px;width:40px;height:1.0px;background:#ccc;"></div>
<div class="a" style="left:126px;top:368.7px;width:22px;height:1.0px;background:#999;"></div>
<div class="a" style="left:118px;top:374.7px;width:40px;height:1.0px;background:#ddd;"></div>
<div class="a" style="left:132px;top:382.7px;width:14px;height:1.0px;background:#ccc;"></div>
<div class="a" style="left:126px;top:390.7px;width:24px;height:1.0px;background:#bbb;"></div>
<div class="a" style="left:55.5px;top:511.6px;width:62.099999999999994px;height:7.5px;background:#c05a26;"></div>
<div class="a" style="left:159.6px;top:511.6px;width:60.70000000000002px;height:7.5px;background:#c05a26;"></div>
<div class="a" style="left:89px;top:445.6px;width:99px;height:2.0px;background:#bdbdbd;"></div>
<div class="a" style="left:72px;top:450.6px;width:134px;height:1.0px;background:#777;"></div>
<div class="a" style="left:119px;top:463.6px;width:38px;height:44.0px;background:#e4e4e4;border:1px solid #aaa;box-sizing:border-box;"></div>
<div class="a" style="left:121px;top:466.6px;width:34px;height:1.0px;background:#9a9a9a;"></div>
<div class="a" style="left:121px;top:471.1px;width:34px;height:1.0px;background:#9a9a9a;"></div>
<div class="a" style="left:121px;top:475.6px;width:34px;height:1.0px;background:#9a9a9a;"></div>
<div class="a" style="left:121px;top:480.1px;width:34px;height:1.0px;background:#9a9a9a;"></div>
<div class="a" style="left:121px;top:484.6px;width:34px;height:1.0px;background:#9a9a9a;"></div>
<div class="a" style="left:121px;top:489.1px;width:34px;height:1.0px;background:#9a9a9a;"></div>
<div class="a" style="left:121px;top:493.6px;width:34px;height:1.0px;background:#9a9a9a;"></div>
<div class="a" style="left:121px;top:498.1px;width:34px;height:1.0px;background:#9a9a9a;"></div>
<div class="a" style="left:121px;top:502.6px;width:34px;height:1.0px;background:#9a9a9a;"></div>
<div class="a" style="left:55.5px;top:625.5px;width:164.8px;height:7.5px;background:#c05a26;"></div>
<div class="a" style="left:86px;top:558.5px;width:104px;height:2.0px;background:#bdbdbd;"></div>
<div class="a" style="left:72px;top:563.5px;width:134px;height:1.0px;background:#777;"></div>
<div class="a" style="left:115px;top:565.5px;width:41px;height:42.0px;background:linear-gradient(90deg,#5a5a50 0px,#c8c8bc 3px,#d6d6cc 60%,#c4c4b8 100%);"></div>
<div class="a" style="left:55.5px;top:739.4000000000001px;width:164.8px;height:7.5px;background:#c05a26;"></div>
<div class="a" style="left:110px;top:667.4000000000001px;width:58px;height:1.5px;background:#b5b5b5;"></div>
<div class="a" style="left:88px;top:673.4000000000001px;width:102px;height:1.5px;background:#6ea5d8;"></div>
<div class="a" style="left:72px;top:677.9000000000001px;width:134px;height:0.7999999999999545px;background:#888;"></div>
<svg class="a" style="left:69px;top:684.4000000000001px;" width="142" height="43" viewBox="0 0 142 43"><defs><filter id="bl8"><feGaussianBlur stdDeviation="0.7"/></filter></defs><g filter="url(#bl8)"><rect x="0" y="0" width="42" height="42" fill="#7d93a3"/><circle cx="21" cy="21" r="12" fill="#2e2e33"/><circle cx="21" cy="21" r="6.5" fill="#4a4a6a"/><rect x="48" y="0" width="42" height="42" fill="#a8372a"/><path d="M56 12 C56 4 82 4 82 12 V34 C82 40 56 40 56 34 Z" fill="#c8b48c"/><rect x="61" y="14" width="16" height="18" fill="#a89470"/><rect x="94" y="0" width="48" height="42" fill="#bfbcb4"/><path d="M101 22 C104 10 132 8 136 18 C138 26 130 31 118 32 C108 33 100 30 101 22 Z" fill="none" stroke="#3a3a3a" stroke-width="4"/><path d="M108 24 L126 16" stroke="#777" stroke-width="3"/></g></svg>
<div class="a" style="left:53px;top:765.8px;width:166px;height:94.5px;border:2px solid #7b1c1c;"></div>
<div class="a" style="left:55.5px;top:768.3px;width:55.3px;height:92.5px;background:#bd5a2a;"></div>
<div class="a" style="left:110.8px;top:768.3px;width:109.50000000000001px;height:92.5px;background:#ffffff;"></div>
<div class="t" style="left:78.0px;top:796.7px;font-size:6px;color:#f6dcc8;transform:scaleX(0.8348);transform-origin:0 0;">Сім’я</div>
<div class="t" style="left:69.0px;top:803.2px;font-size:6px;color:#f6dcc8;transform:scaleX(0.9087);transform-origin:0 0;">Премінгерів</div>
<div class="t" style="left:66.0px;top:811.4px;font-size:4.6px;color:#f6dcc8;font-weight:700;transform:scaleX(0.8717);transform-origin:0 0;">Маркус та Йозефа</div>
<div class="t" style="left:63.0px;top:816.9px;font-size:4.6px;color:#f6dcc8;font-weight:700;transform:scaleX(0.8913);transform-origin:0 0;">Премінгери разом із</div>
<div class="t" style="left:63.0px;top:822.4px;font-size:4.6px;color:#f6dcc8;font-weight:700;transform:scaleX(0.8794);transform-origin:0 0;">синами: Отто та Інго</div>
<svg class="a" style="left:141.3px;top:778.8px;" width="45.2" height="70.8" viewBox="0 0 346 541"><defs><filter id="bpt"><feGaussianBlur stdDeviation="3"/></filter><filter id="bpt2"><feGaussianBlur stdDeviation="4"/></filter></defs>
<linearGradient id="skyg" x1="0" y1="0" x2="1" y2="0"><stop offset="0" stop-color="#c6c6c6"/><stop offset="0.35" stop-color="#b4b4b4"/><stop offset="0.55" stop-color="#7a7a7a"/><stop offset="1" stop-color="#5e5e5e"/></linearGradient>
<rect width="346" height="541" fill="#8e8e8e"/>
<g filter="url(#bpt2)">
<rect x="-10" y="-10" width="366" height="150" fill="url(#skyg)"/>
<ellipse cx="45" cy="66" rx="75" ry="24" fill="#e0e0e0"/>
<ellipse cx="15" cy="85" rx="40" ry="18" fill="#d2d2d2"/>
<path d="M95 60 L120 42 L140 34 L167 55 L213 90 L229 80 L245 72 L275 100 L300 150 L300 260 L90 260 Z" fill="#d0d0d0"/>
<path d="M140 34 L150 70 L175 100 L200 120 L230 125 L270 150 L280 260 L130 260 Z" fill="#bdbdbd"/>
<path d="M-10 89 L60 100 L60 300 L-10 300 Z" fill="#8a8a8a"/>
<path d="M280 90 L306 90 L306 300 L270 300 Z" fill="#b8b8b8"/>
<rect x="300" y="-10" width="56" height="560" fill="#444"/>
</g>
<g filter="url(#bpt)">
<path d="M262 200 L270 120 L276 36 L282 100 L292 200 Z" fill="#3c3c3c"/>
<path d="M304 0 L346 0 V300 L296 300 L300 120 Z" fill="#3e3e3e"/>
<!-- leaves -->
<g fill="#161616">
<ellipse cx="100" cy="12" rx="4" ry="6"/><ellipse cx="85" cy="27" rx="5" ry="3"/><ellipse cx="74" cy="37" rx="4" ry="3"/><ellipse cx="56" cy="62" rx="4" ry="6"/>
<ellipse cx="72" cy="60" rx="4" ry="4"/><ellipse cx="95" cy="60" rx="4" ry="4"/><ellipse cx="103" cy="40" rx="3" ry="5"/><ellipse cx="30" cy="80" rx="6" ry="3"/>
<ellipse cx="36" cy="90" rx="3" ry="5"/><ellipse cx="50" cy="88" rx="5" ry="5"/><ellipse cx="63" cy="78" rx="3" ry="4"/><ellipse cx="100" cy="68" rx="3" ry="4"/><ellipse cx="45" cy="95" rx="4" ry="5"/>
</g>
<path d="M85 52 V75 M78 58 H93" stroke="#2a2a2a" stroke-width="2.5"/>
<!-- shrine -->
<path d="M46 110 C55 95 70 84 88 82 C106 84 118 95 126 108 L120 112 C110 98 100 92 88 92 C74 92 62 100 52 114 Z" fill="#b0b0b0"/>
<path d="M58 180 V110 C62 98 74 90 88 90 C102 90 112 98 116 110 V180 Z" fill="#3a3a3a"/>
<path d="M66 180 V115 C66 100 106 100 106 115 V180 Z" fill="#262626"/>
<rect x="110" y="112" width="4" height="110" fill="#2a2a2a"/>
<!-- lower background -->
<path d="M0 290 L346 290 L346 541 L0 541 Z" fill="#a0a0a0"/>
<path d="M370 300 L290 300 L290 470 L346 470 Z" fill="#474747"/>
<path d="M60 380 L130 380 L140 470 L60 470 Z" fill="#9a9a9a"/>
<path d="M180 400 L232 400 L235 470 L185 470 Z" fill="#4a4a4a"/>
<!-- ground -->
<path d="M0 480 C80 470 200 474 346 478 V541 H0 Z" fill="#b4b4b4"/>
<!-- boy1 -->
<path d="M25 168 C40 160 80 158 96 162 L108 200 L106 262 L100 294 L55 298 L18 294 L5 282 L4 222 L12 185 Z" fill="#e2e2e2"/>
<rect x="7" y="290" width="51" height="44" rx="4" fill="#767676"/>
<ellipse cx="22" cy="330" rx="14" ry="14" fill="#c4c4c4"/>
<rect x="8" y="340" width="28" height="78" rx="5" fill="#222"/>
<ellipse cx="18" cy="428" rx="19" ry="15" fill="#1c1c1c"/>
<path d="M1 444 L62 444 L66 520 L40 526 L0 520 Z" fill="#5c5c5c"/>
<path d="M10 460 L30 470 L50 492 L20 502 Z" fill="#7c7c7c"/>
<rect x="55" y="336" width="26" height="52" fill="#a8a8a8"/>
<rect x="55" y="386" width="28" height="84" rx="4" fill="#242424"/>
<ellipse cx="70" cy="484" rx="20" ry="13" fill="#1a1a1a"/>
<ellipse cx="80" cy="138" rx="19" ry="28" fill="#cdcdcd"/>
<path d="M60 126 C62 106 98 104 100 126 C90 116 70 116 60 126 Z" fill="#3a3a3a"/>
<path d="M70 140 H76 M84 140 H90" stroke="#555" stroke-width="2.5"/>
<g fill="#111"><circle cx="70" cy="200" r="2.5"/><circle cx="60" cy="225" r="2.5"/><circle cx="55" cy="253" r="2.5"/><circle cx="50" cy="280" r="2.5"/><circle cx="95" cy="195" r="2.5"/></g>
<!-- man -->
<rect x="212" y="262" width="82" height="125" rx="8" fill="#929292"/>
<rect x="231" y="381" width="60" height="84" rx="6" fill="#3c3c3c"/>
<path d="M199 466 C214 452 244 454 247 470 L245 500 L204 504 C195 500 193 474 199 466 Z" fill="#1c1c1c"/>
<path d="M258 458 L286 460 L290 505 L260 508 Z" fill="#1c1c1c"/>
<path d="M215 160 C228 152 252 150 268 156 L300 170 C318 190 330 250 326 300 L308 318 L290 318 L282 262 L240 262 L210 318 L196 310 L200 240 L205 190 Z" fill="#dcdcdc"/>
<path d="M238 168 L252 168 L250 246 L240 246 Z" fill="#262626"/>
<ellipse cx="255" cy="133" rx="20" ry="30" fill="#c8c8c8"/>
<path d="M235 120 C238 98 272 98 275 120 C266 110 244 110 235 120 Z" fill="#3c3c3c"/>
<path d="M244 130 H251 M259 130 H266" stroke="#444" stroke-width="2.5"/>
<path d="M246 148 H264" stroke="#333" stroke-width="3"/>
<g fill="#111"><circle cx="222" cy="190" r="2.5"/><circle cx="220" cy="225" r="2.5"/><circle cx="216" cy="260" r="2.5"/><circle cx="282" cy="192" r="2.5"/></g>
<path d="M294 400 L300 382 L306 460 L338 422 L346 440 L312 492 L292 498 Z" fill="#c6c6c6"/>
<!-- woman -->
<path d="M132 192 C140 184 198 184 210 194 L213 300 L214 438 L130 438 L136 300 Z" fill="#dadada"/>
<path d="M134 440 H158 L160 478 L136 480 Z" fill="#d2d2d2"/><path d="M164 440 H186 L190 476 L168 480 Z" fill="#d6d6d6"/>
<ellipse cx="169" cy="152" rx="20" ry="28" fill="#cacaca"/>
<path d="M148 146 C146 118 192 116 190 146 C185 130 154 130 148 146 Z" fill="#232323"/>
<path d="M159 152 H165 M173 152 H179" stroke="#555" stroke-width="2.5"/>
<!-- boy2 -->
<path d="M72 240 C84 232 126 232 138 240 L152 290 L155 355 L58 355 L52 300 Z" fill="#e6e6e6"/>
<rect x="80" y="336" width="69" height="82" rx="6" fill="#8a8a8a"/>
<rect x="92" y="412" width="22" height="52" fill="#cdcdcd"/><rect x="118" y="412" width="25" height="48" fill="#c6c6c6"/>
<rect x="94" y="456" width="19" height="10" fill="#f0f0f0"/>
<ellipse cx="106" cy="490" rx="13" ry="17" fill="#1f1f1f"/><ellipse cx="134" cy="484" rx="14" ry="11" fill="#222"/>
<ellipse cx="114" cy="213" rx="19" ry="28" fill="#cccccc"/>
<path d="M95 203 C96 184 132 184 133 203 C125 193 102 193 95 203 Z" fill="#444"/>
<g fill="#111"><circle cx="122" cy="270" r="2.3"/><circle cx="125" cy="288" r="2.3"/><circle cx="128" cy="306" r="2.3"/><circle cx="78" cy="268" r="2.3"/></g>
</g></svg>
<div class="a" style="left:55.5px;top:881.7px;width:55.3px;height:21.299999999999955px;background:#b9582a;"></div>
<div class="a" style="left:110.8px;top:881.7px;width:109.50000000000001px;height:21.299999999999955px;background:#ffffff;"></div>
<div class="t" style="left:26.0px;top:878.3px;font-size:13.5px;color:#555;transform:scaleX(0.9314);transform-origin:0 0;">10</div>
<div class="a" style="left:260px;top:274px;width:1278px;height:602px;background:#e6e6e6;"></div>
<div class="a" style="left:288px;top:278px;width:1223px;height:13px;background:#ffffff;"></div>
<svg class="a" style="left:0px;top:278px;" width="1876" height="13" viewBox="0 0 1876 13"><rect x="299.8" y="4" width="1" height="5" fill="#666"/><rect x="309.2" y="6" width="1" height="1" fill="#999"/><text x="319.0" y="10" font-size="10" font-family="Liberation Sans" fill="#555" text-anchor="middle">15</text><rect x="327.8" y="6" width="1" height="1" fill="#999"/><rect x="337.2" y="4" width="1" height="5" fill="#666"/><rect x="346.5" y="6" width="1" height="1" fill="#999"/><text x="356.4" y="10" font-size="10" font-family="Liberation Sans" fill="#555" text-anchor="middle">14</text><rect x="365.2" y="6" width="1" height="1" fill="#999"/><rect x="374.6" y="4" width="1" height="5" fill="#666"/><rect x="383.9" y="6" width="1" height="1" fill="#999"/><text x="393.8" y="10" font-size="10" font-family="Liberation Sans" fill="#555" text-anchor="middle">13</text><rect x="402.6" y="6" width="1" height="1" fill="#999"/><rect x="411.9" y="4" width="1" height="5" fill="#666"/><rect x="421.3" y="6" width="1" height="1" fill="#999"/><text x="431.1" y="10" font-size="10" font-family="Liberation Sans" fill="#555" text-anchor="middle">12</text><rect x="440.0" y="6" width="1" height="1" fill="#999"/><rect x="449.3" y="4" width="1" height="5" fill="#666"/><rect x="458.7" y="6" width="1" height="1" fill="#999"/><text x="468.5" y="10" font-size="10" font-family="Liberation Sans" fill="#555" text-anchor="middle">11</text><rect x="477.4" y="6" width="1" height="1" fill="#999"/><rect x="486.7" y="4" width="1" height="5" fill="#666"/><rect x="496.1" y="6" width="1" height="1" fill="#999"/><text x="505.9" y="10" font-size="10" font-family="Liberation Sans" fill="#555" text-anchor="middle">10</text><rect x="514.7" y="6" width="1" height="1" fill="#999"/><rect x="524.1" y="4" width="1" height="5" fill="#666"/><rect x="533.4" y="6" width="1" height="1" fill="#999"/><text x="543.3" y="10" font-size="10" font-family="Liberation Sans" fill="#555" text-anchor="middle">9</text><rect x="552.1" y="6" width="1" height="1" fill="#999"/><rect x="561.5" y="4" width="1" height="5" fill="#666"/><rect x="570.8" y="6" width="1" height="1" fill="#999"/><text x="580.7" y="10" font-size="10" font-family="Liberation Sans" fill="#555" text-anchor="middle">8</text><rect x="589.5" y="6" width="1" height="1" fill="#999"/><rect x="598.9" y="4" width="1" height="5" fill="#666"/><rect x="608.2" y="6" width="1" height="1" fill="#999"/><text x="618.0" y="10" font-size="10" font-family="Liberation Sans" fill="#555" text-anchor="middle">7</text><rect x="626.9" y="6" width="1" height="1" fill="#999"/><rect x="636.2" y="4" width="1" height="5" fill="#666"/><rect x="645.6" y="6" width="1" height="1" fill="#999"/><text x="655.4" y="10" font-size="10" font-family="Liberation Sans" fill="#555" text-anchor="middle">6</text><rect x="664.3" y="6" width="1" height="1" fill="#999"/><rect x="673.6" y="4" width="1" height="5" fill="#666"/><rect x="683.0" y="6" width="1" height="1" fill="#999"/><text x="692.8" y="10" font-size="10" font-family="Liberation Sans" fill="#555" text-anchor="middle">5</text><rect x="701.6" y="6" width="1" height="1" fill="#999"/><rect x="711.0" y="4" width="1" height="5" fill="#666"/><rect x="720.3" y="6" width="1" height="1" fill="#999"/><text x="730.2" y="10" font-size="10" font-family="Liberation Sans" fill="#555" text-anchor="middle">4</text><rect x="739.0" y="6" width="1" height="1" fill="#999"/><rect x="748.4" y="4" width="1" height="5" fill="#666"/><rect x="757.7" y="6" width="1" height="1" fill="#999"/><text x="767.6" y="10" font-size="10" font-family="Liberation Sans" fill="#555" text-anchor="middle">3</text><rect x="776.4" y="6" width="1" height="1" fill="#999"/><rect x="785.8" y="4" width="1" height="5" fill="#666"/><rect x="795.1" y="6" width="1" height="1" fill="#999"/><text x="804.9" y="10" font-size="10" font-family="Liberation Sans" fill="#555" text-anchor="middle">2</text><rect x="813.8" y="6" width="1" height="1" fill="#999"/><rect x="823.1" y="4" width="1" height="5" fill="#666"/><rect x="832.5" y="6" width="1" height="1" fill="#999"/><text x="842.3" y="10" font-size="10" font-family="Liberation Sans" fill="#555" text-anchor="middle">1</text><rect x="851.2" y="6" width="1" height="1" fill="#999"/><rect x="860.5" y="4" width="1" height="5" fill="#666"/><rect x="869.9" y="6" width="1" height="1" fill="#999"/><text x="879.7" y="10" font-size="10" font-family="Liberation Sans" fill="#555" text-anchor="middle">0</text><rect x="888.5" y="6" width="1" height="1" fill="#999"/><rect x="897.9" y="4" width="1" height="5" fill="#666"/><rect x="907.2" y="6" width="1" height="1" fill="#999"/><text x="917.1" y="10" font-size="10" font-family="Liberation Sans" fill="#555" text-anchor="middle">1</text><rect x="925.9" y="6" width="1" height="1" fill="#999"/><rect x="935.3" y="4" width="1" height="5" fill="#666"/><rect x="944.6" y="6" width="1" height="1" fill="#999"/><text x="954.5" y="10" font-size="10" font-family="Liberation Sans" fill="#555" text-anchor="middle">2</text><rect x="963.3" y="6" width="1" height="1" fill="#999"/><rect x="972.7" y="4" width="1" height="5" fill="#666"/><rect x="982.0" y="6" width="1" height="1" fill="#999"/><text x="991.8" y="10" font-size="10" font-family="Liberation Sans" fill="#555" text-anchor="middle">3</text><rect x="1000.7" y="6" width="1" height="1" fill="#999"/><rect x="1010.0" y="4" width="1" height="5" fill="#666"/><rect x="1019.4" y="6" width="1" height="1" fill="#999"/><text x="1029.2" y="10" font-size="10" font-family="Liberation Sans" fill="#555" text-anchor="middle">4</text><rect x="1038.1" y="6" width="1" height="1" fill="#999"/><rect x="1047.4" y="4" width="1" height="5" fill="#666"/><rect x="1056.8" y="6" width="1" height="1" fill="#999"/><text x="1066.6" y="10" font-size="10" font-family="Liberation Sans" fill="#555" text-anchor="middle">5</text><rect x="1075.4" y="6" width="1" height="1" fill="#999"/><rect x="1084.8" y="4" width="1" height="5" fill="#666"/><rect x="1094.1" y="6" width="1" height="1" fill="#999"/><text x="1104.0" y="10" font-size="10" font-family="Liberation Sans" fill="#555" text-anchor="middle">6</text><rect x="1112.8" y="6" width="1" height="1" fill="#999"/><rect x="1122.2" y="4" width="1" height="5" fill="#666"/><rect x="1131.5" y="6" width="1" height="1" fill="#999"/><text x="1141.4" y="10" font-size="10" font-family="Liberation Sans" fill="#555" text-anchor="middle">7</text><rect x="1150.2" y="6" width="1" height="1" fill="#999"/><rect x="1159.6" y="4" width="1" height="5" fill="#666"/><rect x="1168.9" y="6" width="1" height="1" fill="#999"/><text x="1178.7" y="10" font-size="10" font-family="Liberation Sans" fill="#555" text-anchor="middle">8</text><rect x="1187.6" y="6" width="1" height="1" fill="#999"/><rect x="1196.9" y="4" width="1" height="5" fill="#666"/><rect x="1206.3" y="6" width="1" height="1" fill="#999"/><text x="1216.1" y="10" font-size="10" font-family="Liberation Sans" fill="#555" text-anchor="middle">9</text><rect x="1225.0" y="6" width="1" height="1" fill="#999"/><rect x="1234.3" y="4" width="1" height="5" fill="#666"/><rect x="1243.7" y="6" width="1" height="1" fill="#999"/><text x="1253.5" y="10" font-size="10" font-family="Liberation Sans" fill="#555" text-anchor="middle">10</text><rect x="1262.3" y="6" width="1" height="1" fill="#999"/><rect x="1271.7" y="4" width="1" height="5" fill="#666"/><rect x="1281.0" y="6" width="1" height="1" fill="#999"/><text x="1290.9" y="10" font-size="10" font-family="Liberation Sans" fill="#555" text-anchor="middle">11</text><rect x="1299.7" y="6" width="1" height="1" fill="#999"/><rect x="1309.1" y="4" width="1" height="5" fill="#666"/><rect x="1318.4" y="6" width="1" height="1" fill="#999"/><text x="1328.3" y="10" font-size="10" font-family="Liberation Sans" fill="#555" text-anchor="middle">12</text><rect x="1337.1" y="6" width="1" height="1" fill="#999"/><rect x="1346.5" y="4" width="1" height="5" fill="#666"/><rect x="1355.8" y="6" width="1" height="1" fill="#999"/><text x="1365.6" y="10" font-size="10" font-family="Liberation Sans" fill="#555" text-anchor="middle">13</text><rect x="1374.5" y="6" width="1" height="1" fill="#999"/><rect x="1383.8" y="4" width="1" height="5" fill="#666"/><rect x="1393.2" y="6" width="1" height="1" fill="#999"/><text x="1403.0" y="10" font-size="10" font-family="Liberation Sans" fill="#555" text-anchor="middle">14</text><rect x="1411.9" y="6" width="1" height="1" fill="#999"/><rect x="1421.2" y="4" width="1" height="5" fill="#666"/><rect x="1430.6" y="6" width="1" height="1" fill="#999"/><text x="1440.4" y="10" font-size="10" font-family="Liberation Sans" fill="#555" text-anchor="middle">15</text><rect x="1449.2" y="6" width="1" height="1" fill="#999"/><rect x="1458.6" y="4" width="1" height="5" fill="#666"/><rect x="1467.9" y="6" width="1" height="1" fill="#999"/><text x="1477.8" y="10" font-size="10" font-family="Liberation Sans" fill="#555" text-anchor="middle">16</text><rect x="1486.6" y="6" width="1" height="1" fill="#999"/><rect x="1496.0" y="4" width="1" height="5" fill="#666"/><rect x="1505.3" y="6" width="1" height="1" fill="#999"/></svg>
<div class="a" style="left:265px;top:298.8px;width:14px;height:557.2px;background:#ffffff;"></div>
<svg class="a" style="left:0px;top:0px;pointer-events:none;" width="1876" height="903" viewBox="0 0 1876 903"><rect x="270" y="305.8" width="5" height="1" fill="#666"/><rect x="272" y="315.1" width="1" height="1" fill="#999"/><text x="0" y="0" transform="translate(276 324.9) rotate(-90)" font-size="10" font-family="Liberation Sans" fill="#555" text-anchor="middle">7</text><rect x="272" y="333.7" width="1" height="1" fill="#999"/><rect x="270" y="343.1" width="5" height="1" fill="#666"/><rect x="272" y="352.4" width="1" height="1" fill="#999"/><text x="0" y="0" transform="translate(276 362.2) rotate(-90)" font-size="10" font-family="Liberation Sans" fill="#555" text-anchor="middle">6</text><rect x="272" y="371.0" width="1" height="1" fill="#999"/><rect x="270" y="380.4" width="5" height="1" fill="#666"/><rect x="272" y="389.7" width="1" height="1" fill="#999"/><text x="0" y="0" transform="translate(276 399.5) rotate(-90)" font-size="10" font-family="Liberation Sans" fill="#555" text-anchor="middle">5</text><rect x="272" y="408.3" width="1" height="1" fill="#999"/><rect x="270" y="417.6" width="5" height="1" fill="#666"/><rect x="272" y="427.0" width="1" height="1" fill="#999"/><text x="0" y="0" transform="translate(276 436.8) rotate(-90)" font-size="10" font-family="Liberation Sans" fill="#555" text-anchor="middle">4</text><rect x="272" y="445.6" width="1" height="1" fill="#999"/><rect x="270" y="454.9" width="5" height="1" fill="#666"/><rect x="272" y="464.3" width="1" height="1" fill="#999"/><text x="0" y="0" transform="translate(276 474.1) rotate(-90)" font-size="10" font-family="Liberation Sans" fill="#555" text-anchor="middle">3</text><rect x="272" y="482.9" width="1" height="1" fill="#999"/><rect x="270" y="492.2" width="5" height="1" fill="#666"/><rect x="272" y="501.6" width="1" height="1" fill="#999"/><text x="0" y="0" transform="translate(276 511.4) rotate(-90)" font-size="10" font-family="Liberation Sans" fill="#555" text-anchor="middle">2</text><rect x="272" y="520.2" width="1" height="1" fill="#999"/><rect x="270" y="529.5" width="5" height="1" fill="#666"/><rect x="272" y="538.9" width="1" height="1" fill="#999"/><text x="0" y="0" transform="translate(276 548.7) rotate(-90)" font-size="10" font-family="Liberation Sans" fill="#555" text-anchor="middle">1</text><rect x="272" y="557.5" width="1" height="1" fill="#999"/><rect x="270" y="566.9" width="5" height="1" fill="#666"/><rect x="272" y="576.2" width="1" height="1" fill="#999"/><text x="0" y="0" transform="translate(276 586.0) rotate(-90)" font-size="10" font-family="Liberation Sans" fill="#555" text-anchor="middle">0</text><rect x="272" y="594.8" width="1" height="1" fill="#999"/><rect x="270" y="604.1" width="5" height="1" fill="#666"/><rect x="272" y="613.5" width="1" height="1" fill="#999"/><text x="0" y="0" transform="translate(276 623.3) rotate(-90)" font-size="10" font-family="Liberation Sans" fill="#555" text-anchor="middle">1</text><rect x="272" y="632.1" width="1" height="1" fill="#999"/><rect x="270" y="641.4" width="5" height="1" fill="#666"/><rect x="272" y="650.8" width="1" height="1" fill="#999"/><text x="0" y="0" transform="translate(276 660.6) rotate(-90)" font-size="10" font-family="Liberation Sans" fill="#555" text-anchor="middle">2</text><rect x="272" y="669.4" width="1" height="1" fill="#999"/><rect x="270" y="678.8" width="5" height="1" fill="#666"/><rect x="272" y="688.1" width="1" height="1" fill="#999"/><text x="0" y="0" transform="translate(276 697.9) rotate(-90)" font-size="10" font-family="Liberation Sans" fill="#555" text-anchor="middle">3</text><rect x="272" y="706.7" width="1" height="1" fill="#999"/><rect x="270" y="716.0" width="5" height="1" fill="#666"/><rect x="272" y="725.4" width="1" height="1" fill="#999"/><text x="0" y="0" transform="translate(276 735.2) rotate(-90)" font-size="10" font-family="Liberation Sans" fill="#555" text-anchor="middle">4</text><rect x="272" y="744.0" width="1" height="1" fill="#999"/><rect x="270" y="753.4" width="5" height="1" fill="#666"/><rect x="272" y="762.7" width="1" height="1" fill="#999"/><text x="0" y="0" transform="translate(276 772.5) rotate(-90)" font-size="10" font-family="Liberation Sans" fill="#555" text-anchor="middle">5</text><rect x="272" y="781.3" width="1" height="1" fill="#999"/><rect x="270" y="790.6" width="5" height="1" fill="#666"/><rect x="272" y="800.0" width="1" height="1" fill="#999"/><text x="0" y="0" transform="translate(276 809.8) rotate(-90)" font-size="10" font-family="Liberation Sans" fill="#555" text-anchor="middle">6</text><rect x="272" y="818.6" width="1" height="1" fill="#999"/><rect x="270" y="827.9" width="5" height="1" fill="#666"/><rect x="272" y="837.3" width="1" height="1" fill="#999"/><text x="0" y="0" transform="translate(276 847.1) rotate(-90)" font-size="10" font-family="Liberation Sans" fill="#555" text-anchor="middle">7</text></svg>
<div class="a" style="left:279px;top:298px;width:7px;height:558px;background:#e9e6ee;"></div>
<div class="a" style="left:286px;top:298.5px;width:379px;height:557.5px;background:#bb5a2b;"></div>
<div class="a" style="left:665px;top:298.5px;width:7px;height:557.5px;background:#dd8a22;"></div>
<div class="a" style="left:672px;top:298.5px;width:839px;height:557.5px;background:#ffffff;"></div>
<div class="a" style="left:861px;top:307px;width:1px;height:544px;background:#e2e2e2;"></div>
<div class="a" style="left:861px;top:307px;width:441px;height:1px;background:#ececec;"></div>
<div class="t" style="left:412.8px;top:433.5px;font-size:36px;color:#fdf1e0;transform:scaleX(1.0899);transform-origin:0 0;">Сім’я</div>
<div class="t" style="left:345.8px;top:478.2px;font-size:38px;color:#fdf1e0;transform:scaleX(1.1040);transform-origin:0 0;">Премінгерів</div>
<div class="t" style="left:319.0px;top:544.7px;font-size:27px;color:#fdf1e0;transform:scaleX(1.2090);transform-origin:0 0;-webkit-text-stroke:0.5px #fdf1e0;">Маркус та Йозефа</div>
<div class="t" style="left:300.6px;top:583.1px;font-size:27px;color:#fdf1e0;transform:scaleX(1.2656);transform-origin:0 0;-webkit-text-stroke:0.5px #fdf1e0;">Премінгери разом із</div>
<div class="t" style="left:302.0px;top:619.9px;font-size:27px;color:#fdf1e0;transform:scaleX(1.2287);transform-origin:0 0;-webkit-text-stroke:0.5px #fdf1e0;">синами: Отто та Інго</div>
<svg class="a" style="left:345px;top:512px;" width="234" height="3" viewBox="0 0 234 3"><polyline points="0.0,1.5 2.0,0 4.0,1.5 6.0,0 8.0,1.5 10.0,0 12.0,1.5 14.0,0 16.0,1.5 18.0,0 20.0,1.5 22.0,0 24.0,1.5 26.0,0 28.0,1.5 30.0,0 32.0,1.5 34.0,0 36.0,1.5 38.0,0 40.0,1.5 42.0,0 44.0,1.5 46.0,0 48.0,1.5 50.0,0 52.0,1.5 54.0,0 56.0,1.5 58.0,0 60.0,1.5 62.0,0 64.0,1.5 66.0,0 68.0,1.5 70.0,0 72.0,1.5 74.0,0 76.0,1.5 78.0,0 80.0,1.5 82.0,0 84.0,1.5 86.0,0 88.0,1.5 90.0,0 92.0,1.5 94.0,0 96.0,1.5 98.0,0 100.0,1.5 102.0,0 104.0,1.5 106.0,0 108.0,1.5 110.0,0 112.0,1.5 114.0,0 116.0,1.5 118.0,0 120.0,1.5 122.0,0 124.0,1.5 126.0,0 128.0,1.5 130.0,0 132.0,1.5 134.0,0 136.0,1.5 138.0,0 140.0,1.5 142.0,0 144.0,1.5 146.0,0 148.0,1.5 150.0,0 152.0,1.5 154.0,0 156.0,1.5 158.0,0 160.0,1.5 162.0,0 164.0,1.5 166.0,0 168.0,1.5 170.0,0 172.0,1.5 174.0,0 176.0,1.5 178.0,0 180.0,1.5 182.0,0 184.0,1.5 186.0,0 188.0,1.5 190.0,0 192.0,1.5 194.0,0 196.0,1.5 198.0,0 200.0,1.5 202.0,0 204.0,1.5 206.0,0 208.0,1.5 210.0,0 212.0,1.5 214.0,0 216.0,1.5 218.0,0 220.0,1.5 222.0,0 224.0,1.5 226.0,0 228.0,1.5 230.0,0 232.0,1.5" fill="none" stroke="#e2504a" stroke-width="1"/></svg>
<svg class="a" style="left:319px;top:569.5px;" width="121" height="3" viewBox="0 0 121 3"><polyline points="0.0,1.5 2.0,0 4.0,1.5 6.0,0 8.0,1.5 10.0,0 12.0,1.5 14.0,0 16.0,1.5 18.0,0 20.0,1.5 22.0,0 24.0,1.5 26.0,0 28.0,1.5 30.0,0 32.0,1.5 34.0,0 36.0,1.5 38.0,0 40.0,1.5 42.0,0 44.0,1.5 46.0,0 48.0,1.5 50.0,0 52.0,1.5 54.0,0 56.0,1.5 58.0,0 60.0,1.5 62.0,0 64.0,1.5 66.0,0 68.0,1.5 70.0,0 72.0,1.5 74.0,0 76.0,1.5 78.0,0 80.0,1.5 82.0,0 84.0,1.5 86.0,0 88.0,1.5 90.0,0 92.0,1.5 94.0,0 96.0,1.5 98.0,0 100.0,1.5 102.0,0 104.0,1.5 106.0,0 108.0,1.5 110.0,0 112.0,1.5 114.0,0 116.0,1.5 118.0,0" fill="none" stroke="#e2504a" stroke-width="1"/></svg>
<svg class="a" style="left:301px;top:608px;" width="182" height="3" viewBox="0 0 182 3"><polyline points="0.0,1.5 2.0,0 4.0,1.5 6.0,0 8.0,1.5 10.0,0 12.0,1.5 14.0,0 16.0,1.5 18.0,0 20.0,1.5 22.0,0 24.0,1.5 26.0,0 28.0,1.5 30.0,0 32.0,1.5 34.0,0 36.0,1.5 38.0,0 40.0,1.5 42.0,0 44.0,1.5 46.0,0 48.0,1.5 50.0,0 52.0,1.5 54.0,0 56.0,1.5 58.0,0 60.0,1.5 62.0,0 64.0,1.5 66.0,0 68.0,1.5 70.0,0 72.0,1.5 74.0,0 76.0,1.5 78.0,0 80.0,1.5 82.0,0 84.0,1.5 86.0,0 88.0,1.5 90.0,0 92.0,1.5 94.0,0 96.0,1.5 98.0,0 100.0,1.5 102.0,0 104.0,1.5 106.0,0 108.0,1.5 110.0,0 112.0,1.5 114.0,0 116.0,1.5 118.0,0 120.0,1.5 122.0,0 124.0,1.5 126.0,0 128.0,1.5 130.0,0 132.0,1.5 134.0,0 136.0,1.5 138.0,0 140.0,1.5 142.0,0 144.0,1.5 146.0,0 148.0,1.5 150.0,0 152.0,1.5 154.0,0 156.0,1.5 158.0,0 160.0,1.5 162.0,0 164.0,1.5 166.0,0 168.0,1.5 170.0,0 172.0,1.5 174.0,0 176.0,1.5 178.0,0 180.0,1.5" fill="none" stroke="#e2504a" stroke-width="1"/></svg>
<svg class="a" style="left:903px;top:307px;" width="346" height="541" viewBox="0 0 346 541"><defs><filter id="bp"><feGaussianBlur stdDeviation="1.6"/></filter><filter id="bp2"><feGaussianBlur stdDeviation="4"/></filter></defs>
<linearGradient id="skyg" x1="0" y1="0" x2="1" y2="0"><stop offset="0" stop-color="#c6c6c6"/><stop offset="0.35" stop-color="#b4b4b4"/><stop offset="0.55" stop-color="#7a7a7a"/><stop offset="1" stop-color="#5e5e5e"/></linearGradient>
<rect width="346" height="541" fill="#8e8e8e"/>
<g filter="url(#bp2)">
<rect x="-10" y="-10" width="366" height="150" fill="url(#skyg)"/>
<ellipse cx="45" cy="66" rx="75" ry="24" fill="#e0e0e0"/>
<ellipse cx="15" cy="85" rx="40" ry="18" fill="#d2d2d2"/>
<path d="M95 60 L120 42 L140 34 L167 55 L213 90 L229 80 L245 72 L275 100 L300 150 L300 260 L90 260 Z" fill="#d0d0d0"/>
<path d="M140 34 L150 70 L175 100 L200 120 L230 125 L270 150 L280 260 L130 260 Z" fill="#bdbdbd"/>
<path d="M-10 89 L60 100 L60 300 L-10 300 Z" fill="#8a8a8a"/>
<path d="M280 90 L306 90 L306 300 L270 300 Z" fill="#b8b8b8"/>
<rect x="300" y="-10" width="56" height="560" fill="#444"/>
</g>
<g filter="url(#bp)">
<path d="M262 200 L270 120 L276 36 L282 100 L292 200 Z" fill="#3c3c3c"/>
<path d="M304 0 L346 0 V300 L296 300 L300 120 Z" fill="#3e3e3e"/>
<!-- leaves -->
<g fill="#161616">
<ellipse cx="100" cy="12" rx="4" ry="6"/><ellipse cx="85" cy="27" rx="5" ry="3"/><ellipse cx="74" cy="37" rx="4" ry="3"/><ellipse cx="56" cy="62" rx="4" ry="6"/>
<ellipse cx="72" cy="60" rx="4" ry="4"/><ellipse cx="95" cy="60" rx="4" ry="4"/><ellipse cx="103" cy="40" rx="3" ry="5"/><ellipse cx="30" cy="80" rx="6" ry="3"/>
<ellipse cx="36" cy="90" rx="3" ry="5"/><ellipse cx="50" cy="88" rx="5" ry="5"/><ellipse cx="63" cy="78" rx="3" ry="4"/><ellipse cx="100" cy="68" rx="3" ry="4"/><ellipse cx="45" cy="95" rx="4" ry="5"/>
</g>
<path d="M85 52 V75 M78 58 H93" stroke="#2a2a2a" stroke-width="2.5"/>
<!-- shrine -->
<path d="M46 110 C55 95 70 84 88 82 C106 84 118 95 126 108 L120 112 C110 98 100 92 88 92 C74 92 62 100 52 114 Z" fill="#b0b0b0"/>
<path d="M58 180 V110 C62 98 74 90 88 90 C102 90 112 98 116 110 V180 Z" fill="#3a3a3a"/>
<path d="M66 180 V115 C66 100 106 100 106 115 V180 Z" fill="#262626"/>
<rect x="110" y="112" width="4" height="110" fill="#2a2a2a"/>
<!-- lower background -->
<path d="M0 290 L346 290 L346 541 L0 541 Z" fill="#a0a0a0"/>
<path d="M370 300 L290 300 L290 470 L346 470 Z" fill="#474747"/>
<path d="M60 380 L130 380 L140 470 L60 470 Z" fill="#9a9a9a"/>
<path d="M180 400 L232 400 L235 470 L185 470 Z" fill="#4a4a4a"/>
<!-- ground -->
<path d="M0 480 C80 470 200 474 346 478 V541 H0 Z" fill="#b4b4b4"/>
<!-- boy1 -->
<path d="M25 168 C40 160 80 158 96 162 L108 200 L106 262 L100 294 L55 298 L18 294 L5 282 L4 222 L12 185 Z" fill="#e2e2e2"/>
<rect x="7" y="290" width="51" height="44" rx="4" fill="#767676"/>
<ellipse cx="22" cy="330" rx="14" ry="14" fill="#c4c4c4"/>
<rect x="8" y="340" width="28" height="78" rx="5" fill="#222"/>
<ellipse cx="18" cy="428" rx="19" ry="15" fill="#1c1c1c"/>
<path d="M1 444 L62 444 L66 520 L40 526 L0 520 Z" fill="#5c5c5c"/>
<path d="M10 460 L30 470 L50 492 L20 502 Z" fill="#7c7c7c"/>
<rect x="55" y="336" width="26" height="52" fill="#a8a8a8"/>
<rect x="55" y="386" width="28" height="84" rx="4" fill="#242424"/>
<ellipse cx="70" cy="484" rx="20" ry="13" fill="#1a1a1a"/>
<ellipse cx="80" cy="138" rx="19" ry="28" fill="#cdcdcd"/>
<path d="M60 126 C62 106 98 104 100 126 C90 116 70 116 60 126 Z" fill="#3a3a3a"/>
<path d="M70 140 H76 M84 140 H90" stroke="#555" stroke-width="2.5"/>
<g fill="#111"><circle cx="70" cy="200" r="2.5"/><circle cx="60" cy="225" r="2.5"/><circle cx="55" cy="253" r="2.5"/><circle cx="50" cy="280" r="2.5"/><circle cx="95" cy="195" r="2.5"/></g>
<!-- man -->
<rect x="212" y="262" width="82" height="125" rx="8" fill="#929292"/>
<rect x="231" y="381" width="60" height="84" rx="6" fill="#3c3c3c"/>
<path d="M199 466 C214 452 244 454 247 470 L245 500 L204 504 C195 500 193 474 199 466 Z" fill="#1c1c1c"/>
<path d="M258 458 L286 460 L290 505 L260 508 Z" fill="#1c1c1c"/>
<path d="M215 160 C228 152 252 150 268 156 L300 170 C318 190 330 250 326 300 L308 318 L290 318 L282 262 L240 262 L210 318 L196 310 L200 240 L205 190 Z" fill="#dcdcdc"/>
<path d="M238 168 L252 168 L250 246 L240 246 Z" fill="#262626"/>
<ellipse cx="255" cy="133" rx="20" ry="30" fill="#c8c8c8"/>
<path d="M235 120 C238 98 272 98 275 120 C266 110 244 110 235 120 Z" fill="#3c3c3c"/>
<path d="M244 130 H251 M259 130 H266" stroke="#444" stroke-width="2.5"/>
<path d="M246 148 H264" stroke="#333" stroke-width="3"/>
<g fill="#111"><circle cx="222" cy="190" r="2.5"/><circle cx="220" cy="225" r="2.5"/><circle cx="216" cy="260" r="2.5"/><circle cx="282" cy="192" r="2.5"/></g>
<path d="M294 400 L300 382 L306 460 L338 422 L346 440 L312 492 L292 498 Z" fill="#c6c6c6"/>
<!-- woman -->
<path d="M132 192 C140 184 198 184 210 194 L213 300 L214 438 L130 438 L136 300 Z" fill="#dadada"/>
<path d="M134 440 H158 L160 478 L136 480 Z" fill="#d2d2d2"/><path d="M164 440 H186 L190 476 L168 480 Z" fill="#d6d6d6"/>
<ellipse cx="169" cy="152" rx="20" ry="28" fill="#cacaca"/>
<path d="M148 146 C146 118 192 116 190 146 C185 130 154 130 148 146 Z" fill="#232323"/>
<path d="M159 152 H165 M173 152 H179" stroke="#555" stroke-width="2.5"/>
<!-- boy2 -->
<path d="M72 240 C84 232 126 232 138 240 L152 290 L155 355 L58 355 L52 300 Z" fill="#e6e6e6"/>
<rect x="80" y="336" width="69" height="82" rx="6" fill="#8a8a8a"/>
<rect x="92" y="412" width="22" height="52" fill="#cdcdcd"/><rect x="118" y="412" width="25" height="48" fill="#c6c6c6"/>
<rect x="94" y="456" width="19" height="10" fill="#f0f0f0"/>
<ellipse cx="106" cy="490" rx="13" ry="17" fill="#1f1f1f"/><ellipse cx="134" cy="484" rx="14" ry="11" fill="#222"/>
<ellipse cx="114" cy="213" rx="19" ry="28" fill="#cccccc"/>
<path d="M95 203 C96 184 132 184 133 203 C125 193 102 193 95 203 Z" fill="#444"/>
<g fill="#111"><circle cx="122" cy="270" r="2.3"/><circle cx="125" cy="288" r="2.3"/><circle cx="128" cy="306" r="2.3"/><circle cx="78" cy="268" r="2.3"/></g>
</g></svg>
<div class="a" style="left:1516px;top:274px;width:22px;height:602px;background:#dcdcdc;"></div>
<div class="a" style="left:1522px;top:276px;width:14px;height:14px;background:#ffffff;"></div>
<svg class="a" style="left:1524px;top:279px;" width="10" height="8" viewBox="0 0 10 8"><path d="M1 6.5 L5 1.5 L9 6.5 Z" fill="#606060"/></svg>
<div class="a" style="left:1522px;top:607px;width:14px;height:28px;background:#ffffff;border:1px solid #c8c8c8;box-sizing:border-box;"></div>
<div class="a" style="left:1522.5px;top:807.5px;width:13.099999999999909px;height:12.5px;background:#ffffff;"></div>
<svg class="a" style="left:1524px;top:810px;" width="10" height="8" viewBox="0 0 10 8"><path d="M1.5 1.5 L5 5.5 L8.5 1.5 Z" fill="#606060"/></svg>
<svg class="a" style="left:1524px;top:825px;" width="10" height="12" viewBox="0 0 10 12"><path d="M1.5 5.5 L5 1.5 L8.5 5.5 Z M1.5 10.5 L5 6.5 L8.5 10.5 Z" fill="#707070"/></svg>
<svg class="a" style="left:1524px;top:842px;" width="10" height="12" viewBox="0 0 10 12"><path d="M1.5 1.5 L5 5.5 L8.5 1.5 Z M1.5 6.5 L5 10.5 L8.5 6.5 Z" fill="#707070"/></svg>
<div class="a" style="left:260px;top:856px;width:1256px;height:20px;background:#e6e6e6;"></div>
<div class="a" style="left:264px;top:858px;width:13px;height:13.5px;background:#ffffff;"></div>
<svg class="a" style="left:265px;top:860px;" width="10" height="10" viewBox="0 0 10 10"><path d="M7 1.5 L2.5 5 L7 8.5 Z" fill="#606060"/></svg>
<div class="a" style="left:277px;top:858px;width:47px;height:13.5px;background:#dadada;"></div>
<div class="a" style="left:324px;top:857.7px;width:1181px;height:13.799999999999955px;background:#ffffff;border:1px solid #bdbdbd;box-sizing:border-box;"></div>
<div class="a" style="left:1505px;top:858px;width:14px;height:13.5px;background:#ffffff;"></div>
<svg class="a" style="left:1507px;top:860px;" width="10" height="10" viewBox="0 0 10 10"><path d="M3 1.5 L7.5 5 L3 8.5 Z" fill="#606060"/></svg>
<div class="a" style="left:260px;top:875px;width:1278px;height:1px;background:#d0d0d0;"></div>
<div class="t" style="left:271.0px;top:886.0px;font-size:13px;color:#444;transform:scaleX(1.0844);transform-origin:0 0;">Нотатки до слайда</div>
<div class="a" style="left:-10px;top:880px;width:491px;height:40px;background:rgba(0,0,0,0.5);border-radius:9px;"></div>
<div class="t" style="left:-5.0px;top:892.3px;font-size:18.5px;color:#ffffff;transform:scaleX(1.1110);transform-origin:0 0;">Павло Крайній ЧНУ імені Юрія Федьковича (гість)</div>
<div class="a" style="left:1597.5px;top:182px;width:273px;height:151px;border-radius:10px;background:#5b5fc7;"></div>
<div class="a" style="left:1602.5px;top:187px;width:263px;height:141px;border-radius:6px;background:#fff;"></div>
<svg class="a" style="left:1603.5px;top:188px;" width="261" height="139" viewBox="0 0 261 139"><defs><filter id="b1"><feGaussianBlur stdDeviation="2.5"/></filter><clipPath id="c1"><rect width="261" height="139" rx="5"/></clipPath></defs>
<g clip-path="url(#c1)"><g filter="url(#b1)">
<rect width="261" height="139" fill="#e4e2da"/>
<rect x="-5" y="-5" width="98" height="150" fill="#d9c9ad"/>
<rect x="8" y="0" width="10" height="139" fill="#e2d6c0"/><rect x="30" y="0" width="14" height="139" fill="#cfbd9c"/><rect x="58" y="0" width="10" height="139" fill="#e0d2b8"/><rect x="76" y="0" width="8" height="139" fill="#cdb896"/>
<rect x="86" y="0" width="7" height="139" fill="#c4a678"/>
<rect x="186" y="0" width="12" height="139" fill="#c09a62"/>
<rect x="196" y="0" width="70" height="145" fill="#dac8a8"/><rect x="215" y="0" width="12" height="139" fill="#e4d6bc"/><rect x="240" y="0" width="10" height="139" fill="#d2bd98"/>
<path d="M38 145 C44 112 70 100 100 96 L120 92 L150 92 L178 97 C200 102 215 110 220 126 L224 145 Z" fill="#3b3e39"/>
<path d="M110 98 L120 145 L146 145 L152 98 Z" fill="#2f3f52"/>
<path d="M112 96 L130 120 L150 96" fill="none" stroke="#8cb8d8" stroke-width="4"/>
<ellipse cx="128" cy="64" rx="33" ry="46" fill="#b58e7c"/>
<ellipse cx="126" cy="45" rx="24" ry="24" fill="#ccac9c"/>
<ellipse cx="160" cy="70" rx="6" ry="11" fill="#b08a78"/>
<path d="M96 50 C96 30 108 18 128 18 C146 18 158 28 160 48 L156 48 C150 34 140 26 128 26 C114 26 104 34 100 50 Z" fill="#4e423c"/>
<ellipse cx="126" cy="88" rx="16" ry="9" fill="#a88070"/>
</g></g></svg>
<svg class="a" style="left:1597px;top:339px;" width="274" height="151" viewBox="0 0 274 151"><defs><filter id="b2"><feGaussianBlur stdDeviation="2"/></filter><clipPath id="c2"><rect width="274" height="151" rx="8"/></clipPath></defs>
<g clip-path="url(#c2)"><g filter="url(#b2)">
<rect width="274" height="151" fill="#e9e9ea"/>
<path d="M0 0 H274 V45 L210 62 L95 50 L30 30 L0 30 Z" fill="#dcdcdd"/>
<path d="M0 0 H32 L28 151 H0 Z" fill="#e2e2e3"/>
<ellipse cx="113" cy="12" rx="22" ry="11" fill="#cfcfd0"/>
<ellipse cx="258" cy="42" rx="18" ry="7" fill="#cdcdce"/>
<ellipse cx="113" cy="37" rx="10" ry="11" fill="#f4eee0"/>
<ellipse cx="266" cy="58" rx="7" ry="9" fill="#f4eee0"/>
<rect x="35" y="49" width="49" height="21" fill="#f6f6f6"/>
<rect x="200" y="62" width="74" height="89" fill="#f0f0f0"/>
<rect x="2" y="80" width="33" height="14" fill="#3a2e26"/><rect x="5" y="70" width="25" height="10" fill="#7a8a5a"/><rect x="0" y="94" width="14" height="40" fill="#5c5244"/>
<path d="M165 20 C140 20 132 45 130 90 L125 151 H222 L218 90 C214 45 192 20 165 20 Z" fill="#1a1414"/>
<ellipse cx="163" cy="72" rx="28" ry="39" fill="#d6ad9c"/>
<path d="M134 62 C134 34 148 28 163 28 C180 28 192 36 192 62 C184 44 172 38 163 38 C152 38 140 44 134 62 Z" fill="#1a1414"/>
<ellipse cx="163" cy="96" rx="8" ry="3" fill="#b85a5a"/>
<path d="M72 151 C78 130 100 118 122 114 L135 112 L138 151 Z" fill="#eeeaf2"/>
<path d="M190 112 L210 116 C232 122 246 132 252 151 H200 Z" fill="#e8eef6"/>
<path d="M136 112 L150 151 H190 L194 112 L165 135 Z" fill="#e6cdd6"/>
</g></g></svg>
<svg class="a" style="left:1597px;top:497px;" width="274" height="151" viewBox="0 0 274 151"><defs><filter id="b3"><feGaussianBlur stdDeviation="2.2"/></filter><clipPath id="c3"><rect width="274" height="151" rx="8"/></clipPath></defs>
<g clip-path="url(#c3)"><g filter="url(#b3)">
<rect width="274" height="151" fill="#222121"/>
<rect x="0" y="0" width="100" height="151" fill="#292828"/>
<rect x="248" y="0" width="26" height="151" fill="#1e2832"/>
<path d="M45 151 C52 118 70 96 100 90 L175 90 C205 96 225 118 235 151 Z" fill="#c08a8c"/>
<path d="M115 96 C115 108 160 108 160 96 L156 84 H119 Z" fill="#8a6a5c"/>
<ellipse cx="137" cy="75" rx="28" ry="40" fill="#b28c7c"/>
<path d="M108 62 C106 40 120 32 137 32 C154 32 168 40 166 62 C160 50 150 44 137 44 C124 44 114 50 108 62 Z" fill="#1c1816"/>
</g></g></svg>
<div class="a" style="left:1605px;top:441.7px;width:48px;height:42px;background:rgba(40,40,40,0.78);border-radius:6px;"></div>
<svg class="a" style="left:1617px;top:450.5px;" width="24" height="24" viewBox="0 0 24 24"><defs><mask id="mk1629462"><rect width="24" height="24" fill="#fff"/><path d="M3 3 L21 21" stroke="#000" stroke-width="4"/></mask></defs><g mask="url(#mk1629462)"><rect x="8.5" y="2" width="7" height="13" rx="3.5" fill="#fff"/><path d="M5 11.5 C5 15.5 8 18 12 18 C16 18 19 15.5 19 11.5" fill="none" stroke="#fff" stroke-width="1.5"/></g><path d="M12 18 V22" stroke="#fff" stroke-width="1.5"/><path d="M3.5 3.5 L20.5 20.5" stroke="#fff" stroke-width="1.5" stroke-linecap="round"/></svg>
<div class="a" style="left:1604px;top:598.8px;width:48px;height:42px;background:rgba(40,40,40,0.78);border-radius:6px;"></div>
<svg class="a" style="left:1616px;top:607.5px;" width="24" height="24" viewBox="0 0 24 24"><defs><mask id="mk1628619"><rect width="24" height="24" fill="#fff"/><path d="M3 3 L21 21" stroke="#000" stroke-width="4"/></mask></defs><g mask="url(#mk1628619)"><rect x="8.5" y="2" width="7" height="13" rx="3.5" fill="#fff"/><path d="M5 11.5 C5 15.5 8 18 12 18 C16 18 19 15.5 19 11.5" fill="none" stroke="#fff" stroke-width="1.5"/></g><path d="M12 18 V22" stroke="#fff" stroke-width="1.5"/><path d="M3.5 3.5 L20.5 20.5" stroke="#fff" stroke-width="1.5" stroke-linecap="round"/></svg>
<svg class="a" style="left:1670px;top:670px;" width="20" height="24" viewBox="0 0 20 24"><path d="M15 2.5 L5.5 12 L15 21.5" fill="none" stroke="#b8b8b8" stroke-width="1.8" stroke-linecap="round" stroke-linejoin="round"/></svg>
<div class="t" style="left:1710.0px;top:670.7px;font-size:24px;color:#242424;transform:scaleX(1.0381);transform-origin:0 0;">1/19</div>
<svg class="a" style="left:1778px;top:670px;" width="20" height="24" viewBox="0 0 20 24"><path d="M5 2.5 L14.5 12 L5 21.5" fill="none" stroke="#242424" stroke-width="1.8" stroke-linecap="round" stroke-linejoin="round"/></svg>
<div class="a" style="left:1597px;top:717px;width:274px;height:151px;border-radius:8px;background:linear-gradient(120deg,#e6eaf0 0%,#e3eef2 50%,#dcefee 100%);border:1px solid #d8e2e4;box-sizing:border-box;"></div>
<div class="a" style="left:1691.8px;top:750.2px;width:84.4px;height:84.4px;border-radius:50%;background:#e2e1d6;box-shadow:0 1px 3px rgba(0,0,0,0.12);"></div>
<div class="t" style="left:1719.0px;top:777.9px;font-size:32px;color:#2c3720;font-weight:700;transform:scaleX(0.8058);transform-origin:0 0;">LL</div>
<div class="a" style="left:1604px;top:819.7px;width:96px;height:41px;background:#737979;border-radius:6px;"></div>
<svg class="a" style="left:1619px;top:829px;" width="22" height="22" viewBox="0 0 22 22"><rect x="3" y="13" width="3.5" height="6" rx="1" fill="#fff"/><rect x="9" y="9" width="3.5" height="10" rx="1" fill="#fff"/><rect x="15" y="4" width="3.5" height="15" rx="1" fill="#fff"/></svg>
<svg class="a" style="left:1664px;top:828px;" width="24" height="24" viewBox="0 0 24 24"><defs><mask id="mk1676840"><rect width="24" height="24" fill="#fff"/><path d="M3 3 L21 21" stroke="#000" stroke-width="4"/></mask></defs><g mask="url(#mk1676840)"><rect x="8.5" y="2" width="7" height="13" rx="3.5" fill="#fff"/><path d="M5 11.5 C5 15.5 8 18 12 18 C16 18 19 15.5 19 11.5" fill="none" stroke="#fff" stroke-width="1.5"/></g><path d="M12 18 V22" stroke="#fff" stroke-width="1.5"/><path d="M3.5 3.5 L20.5 20.5" stroke="#fff" stroke-width="1.5" stroke-linecap="round"/></svg>
<svg class="a" style="left:1537px;top:737px;" width="12" height="18" viewBox="0 0 12 18"><path d="M1 1 V14 L4.5 10.5 L7 16 L9 15 L6.5 9.5 H11 Z" fill="#fff" stroke="#222" stroke-width="1"/></svg></body></html>
